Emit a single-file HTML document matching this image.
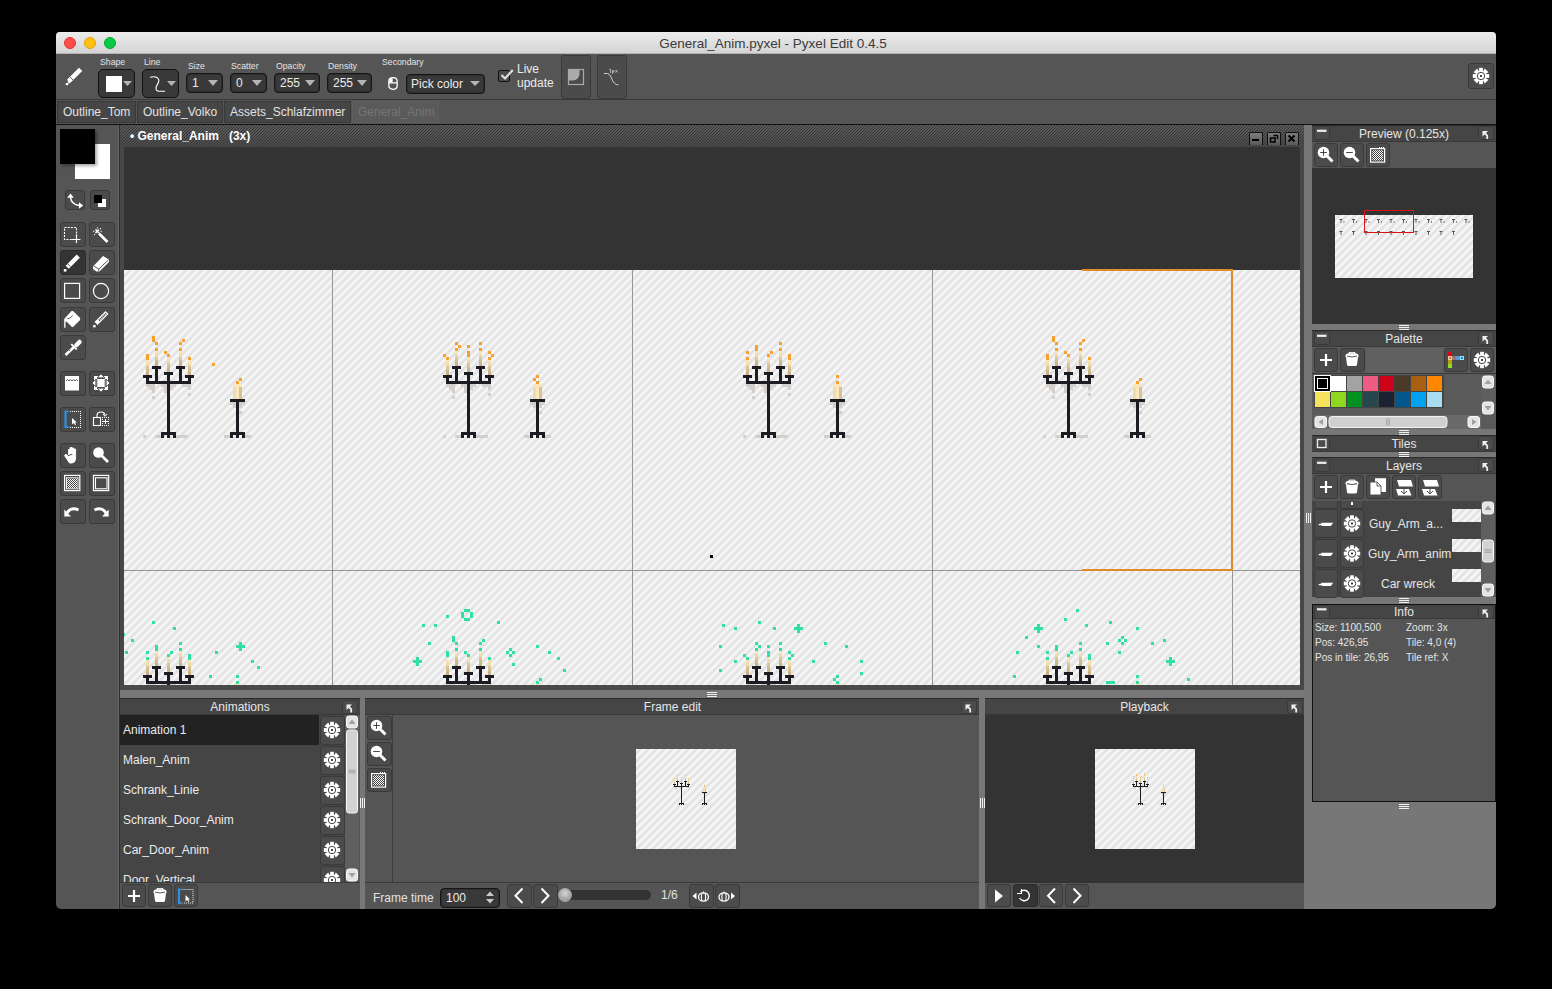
<!DOCTYPE html><html><head><meta charset="utf-8"><style>
*{box-sizing:border-box;margin:0;padding:0}
html,body{width:1552px;height:989px;background:#000;overflow:hidden;font-family:"Liberation Sans",sans-serif;position:relative}
div{position:absolute}
svg{position:absolute;overflow:visible}
.t{white-space:nowrap;line-height:1}
.dd{background:#393939;border:1px solid #161616;border-radius:4px;box-shadow:inset 0 0 0 1px #2e2e2e}
.btn{background:#4b4b4b;border:1px solid #3a3a3a;border-radius:3px}
.btnd{background:#343434;border:1px solid #2a2a2a;border-radius:3px}
.tab{background:#464646;border:1px solid #393939}
.ph{background:#454545;border-top:1px solid #2b2b2b;border-bottom:1px solid #393939}
.split{background:#777}
</style></head><body>
<div style="left:56px;top:32px;width:1440px;height:877px;background:#555;border-radius:4px"></div>
<div style="left:56px;top:32px;width:1440px;height:22px;background:linear-gradient(#ececec,#d4d4d4);border-radius:4px 4px 0 0;border-bottom:1px solid #b4b4b4"></div>
<div style="left:64px;top:37px;width:12px;height:12px;border-radius:50%;background:#fd4e4a;border:1px solid #e2332f"></div>
<div style="left:84px;top:37px;width:12px;height:12px;border-radius:50%;background:#ffc010;border:1px solid #e0a00a"></div>
<div style="left:104px;top:37px;width:12px;height:12px;border-radius:50%;background:#05cb45;border:1px solid #02aa35"></div>
<div class="t" style="left:53px;width:1440px;top:36.5px;text-align:center;font-size:13.5px;color:#3b3b3b">General_Anim.pyxel - Pyxel Edit 0.4.5</div>
<div style="left:56px;top:99px;width:1440px;height:1px;background:#3a3a3a"></div>
<div class="t" style="left:100px;top:57.5px;font-size:8.7px;color:#e4e4e4;">Shape</div>
<div class="t" style="left:144px;top:57.5px;font-size:8.7px;color:#e4e4e4;">Line</div>
<div class="t" style="left:188px;top:61.5px;font-size:8.7px;color:#e4e4e4;">Size</div>
<div class="t" style="left:231px;top:61.5px;font-size:8.7px;color:#e4e4e4;">Scatter</div>
<div class="t" style="left:276px;top:61.5px;font-size:8.7px;color:#e4e4e4;">Opacity</div>
<div class="t" style="left:328px;top:61.5px;font-size:8.7px;color:#e4e4e4;">Density</div>
<div class="t" style="left:382px;top:57.5px;font-size:8.7px;color:#e4e4e4;">Secondary</div>
<div class="dd" style="left:98px;top:69px;width:37px;height:29px;border-radius:5px;border-width:1.5px;border-color:#111;box-shadow:none"></div>
<div class="dd" style="left:142px;top:69px;width:37px;height:29px;border-radius:5px;border-width:1.5px;border-color:#111;box-shadow:none"></div>
<div style="left:106px;top:76px;width:16px;height:16px;background:#fff"></div>
<svg style="left:123px;top:81px;" width="9" height="5" viewBox="0 0 9 5"><path d="M0 0H9L4.5 5Z" fill="#b4b4b4"/></svg>
<svg style="left:167px;top:81px;" width="9" height="5" viewBox="0 0 9 5"><path d="M0 0H9L4.5 5Z" fill="#b4b4b4"/></svg>
<svg style="left:150px;top:76px;" width="17" height="17" viewBox="0 0 17 17"><path d="M0 1.2C4 0.2 7.5 0.5 8.8 3.8C9.6 7 6 9 6 12C6 14.2 7 15.2 9 15.2H15" fill="none" stroke="#fff" stroke-width="1.1"/></svg>
<div class="dd" style="left:186px;top:73px;width:37px;height:20px"></div>
<div class="t" style="left:192px;top:77px;font-size:12px;color:#ececec;">1</div>
<svg style="left:208px;top:80px;" width="10" height="6" viewBox="0 0 10 6"><path d="M0 0H10L5.0 6Z" fill="#b4b4b4"/></svg>
<div class="dd" style="left:230px;top:73px;width:37px;height:20px"></div>
<div class="t" style="left:236px;top:77px;font-size:12px;color:#ececec;">0</div>
<svg style="left:252px;top:80px;" width="10" height="6" viewBox="0 0 10 6"><path d="M0 0H10L5.0 6Z" fill="#b4b4b4"/></svg>
<div class="dd" style="left:274px;top:73px;width:46px;height:20px"></div>
<div class="t" style="left:280px;top:77px;font-size:12px;color:#ececec;">255</div>
<svg style="left:305px;top:80px;" width="10" height="6" viewBox="0 0 10 6"><path d="M0 0H10L5.0 6Z" fill="#b4b4b4"/></svg>
<div class="dd" style="left:327px;top:73px;width:45px;height:20px"></div>
<div class="t" style="left:333px;top:77px;font-size:12px;color:#ececec;">255</div>
<svg style="left:357px;top:80px;" width="10" height="6" viewBox="0 0 10 6"><path d="M0 0H10L5.0 6Z" fill="#b4b4b4"/></svg>
<svg style="left:388px;top:77px;" width="10" height="13" viewBox="0 0 10 13"><path d="M0.8 4.5C0.8 2 2.5 0.7 5 0.7C7.5 0.7 9.2 2 9.2 4.5V8.5C9.2 11 7.5 12.3 5 12.3C2.5 12.3 0.8 11 0.8 8.5Z M0.8 5.8H9.2" fill="none" stroke="#fff" stroke-width="1.3"/><path d="M1.2 5.5V4.5C1.2 2.3 2.6 1.2 4.6 1.1V5.5Z" fill="#fff"/></svg>
<div class="dd" style="left:406px;top:74px;width:79px;height:20px"></div>
<div class="t" style="left:411px;top:77.5px;font-size:12px;color:#ececec;">Pick color</div>
<svg style="left:470px;top:81px;" width="10" height="5" viewBox="0 0 10 5"><path d="M0 0H10L5.0 5Z" fill="#b4b4b4"/></svg>
<div style="left:498px;top:70px;width:12px;height:12px;background:#4a4a4a;border:1px solid #111;border-radius:2px"></div>
<svg style="left:0px;top:0px;" width="1" height="1" viewBox="0 0 1 1"><path d="M501.5 75L505 78.5L512.8 70" fill="none" stroke="#dedede" stroke-width="2.2"/></svg>
<div class="t" style="left:517px;top:63px;font-size:12px;color:#ececec;">Live</div>
<div class="t" style="left:517px;top:77px;font-size:12px;color:#ececec;">update</div>
<div class="btn" style="left:561px;top:55px;width:30px;height:44px"></div>
<div class="btn" style="left:597px;top:55px;width:30px;height:44px"></div>
<svg style="left:0px;top:0px;" width="1" height="1" viewBox="0 0 1 1"><rect x="568.5" y="69.5" width="15" height="15" fill="none" stroke="#ababab" stroke-width="1.2"/><path d="M568.5 69.5H579.5V74A6.5 6.5 0 0 1 573 80.5H568.5Z" fill="#ababab"/></svg>
<svg style="left:0px;top:0px;" width="1" height="1" viewBox="0 0 1 1"><path d="M604 73.5H607.5Q610 74 611.5 78Q613.5 84.5 618.5 85" fill="none" stroke="#d0d0d0" stroke-width="1"/><path d="M609.5 69.5L610.5 69V73M612.5 70.5V74M612.5 70.5H614V72H612.5M615.5 70L617.5 72.5M617.5 70L615.5 72.5" fill="none" stroke="#c8c8c8" stroke-width="0.8"/></svg>
<div class="btn" style="left:1468px;top:63px;width:26px;height:26px"></div>
<div style="left:56px;top:124px;width:1440px;height:1px;background:#111"></div>
<div class="tab" style="left:57px;top:101px;width:79px;height:22px"></div>
<div class="t" style="left:63px;top:106px;font-size:12px;color:#e2e2e2;">Outline_Tom</div>
<div class="tab" style="left:137px;top:101px;width:86px;height:22px"></div>
<div class="t" style="left:143px;top:106px;font-size:12px;color:#e2e2e2;">Outline_Volko</div>
<div class="tab" style="left:224px;top:101px;width:127px;height:22px"></div>
<div class="t" style="left:230px;top:106px;font-size:12px;color:#e2e2e2;">Assets_Schlafzimmer</div>
<div class="tab" style="left:352px;top:101px;width:87px;height:22px;background:#5a5a5a;border-color:#5e5e5e"></div>
<div class="t" style="left:358px;top:106px;font-size:12px;color:#757575;">General_Anim</div>
<div style="left:118px;top:125px;width:1px;height:784px;background:#656565"></div>
<div style="left:119px;top:125px;width:1px;height:784px;background:#2c2c2c"></div>
<div style="left:60px;top:129px;width:35px;height:35px;background:#000"></div>
<div style="left:75px;top:144px;width:35px;height:35px;background:#fff"></div>
<div style="left:60px;top:129px;width:35px;height:35px;background:#000;box-shadow:2px 2px 3px rgba(0,0,0,.35)"></div>
<div class="btn" style="left:65px;top:190px;width:20px;height:20px"></div>
<div class="btn" style="left:90px;top:190px;width:20px;height:20px"></div>
<div class="btn" style="left:59.5px;top:222px;width:26px;height:25px"></div>
<div class="btn" style="left:88.5px;top:222px;width:26px;height:25px"></div>
<div class="btnd" style="left:59.5px;top:250px;width:26px;height:25px"></div>
<div class="btn" style="left:88.5px;top:250px;width:26px;height:25px"></div>
<div class="btn" style="left:59.5px;top:278px;width:26px;height:25px"></div>
<div class="btn" style="left:88.5px;top:278px;width:26px;height:25px"></div>
<div class="btn" style="left:59.5px;top:306.5px;width:26px;height:25px"></div>
<div class="btn" style="left:88.5px;top:306.5px;width:26px;height:25px"></div>
<div class="btn" style="left:59.5px;top:334.5px;width:26px;height:25px"></div>
<div class="btn" style="left:59.5px;top:370.5px;width:26px;height:25px"></div>
<div class="btn" style="left:88.5px;top:370.5px;width:26px;height:25px"></div>
<div class="btn" style="left:59.5px;top:406.5px;width:26px;height:25px"></div>
<div class="btn" style="left:88.5px;top:406.5px;width:26px;height:25px"></div>
<div class="btn" style="left:59.5px;top:442.5px;width:26px;height:25px"></div>
<div class="btn" style="left:88.5px;top:442.5px;width:26px;height:25px"></div>
<div class="btn" style="left:59.5px;top:470.5px;width:26px;height:25px"></div>
<div class="btn" style="left:88.5px;top:470.5px;width:26px;height:25px"></div>
<div class="btn" style="left:59.5px;top:498.5px;width:26px;height:25px"></div>
<div class="btn" style="left:88.5px;top:498.5px;width:26px;height:25px"></div>
<svg style="left:120px;top:125px" width="1184" height="22" viewBox="120 125 1184 22"><defs><linearGradient id="hg" x1="0" y1="0" x2="0" y2="1"><stop offset="0" stop-color="#5c5c5c"/><stop offset="1" stop-color="#4c4c4c"/></linearGradient><pattern id="hp" width="3" height="3" x="0" y="0" patternUnits="userSpaceOnUse"><path d="M0 0h1v1h-1zM2 1h1v1h-1zM1 2h1v1h-1z" fill="#353535" shape-rendering="crispEdges"/></pattern></defs><rect x="120" y="125" width="1184" height="22" fill="url(#hg)"/><rect x="120" y="125" width="1184" height="22" fill="url(#hp)"/></svg>
<div class="t" style="left:130px;top:130px;font-size:12px;font-weight:bold;color:#fff">&bull; General_Anim&nbsp;&nbsp;&nbsp;(3x)</div>
<div style="left:1249px;top:132px;width:14px;height:13px;background:linear-gradient(#7c7c7c,#5a5a5a);border:1px solid #111;border-bottom:none;border-radius:2px 2px 0 0"></div>
<div style="left:1267px;top:132px;width:14px;height:13px;background:linear-gradient(#7c7c7c,#5a5a5a);border:1px solid #111;border-bottom:none;border-radius:2px 2px 0 0"></div>
<div style="left:1285px;top:132px;width:14px;height:13px;background:linear-gradient(#7c7c7c,#5a5a5a);border:1px solid #111;border-bottom:none;border-radius:2px 2px 0 0"></div>
<div style="left:120px;top:147px;width:1184px;height:538px;background:#474747"></div>
<div style="left:124px;top:147px;width:1176px;height:538px;background:#333"></div>
<svg style="left:0;top:0" width="1552" height="989" viewBox="0 0 1552 989"><defs><pattern id="str" width="8" height="8" x="0" y="0" patternUnits="userSpaceOnUse"><rect width="8" height="8" fill="#e4e4e4"/><path d="M2 0h1v1h-1zM3 0h1v1h-1zM4 0h1v1h-1zM5 0h1v1h-1zM1 1h1v1h-1zM2 1h1v1h-1zM3 1h1v1h-1zM4 1h1v1h-1zM0 2h1v1h-1zM1 2h1v1h-1zM2 2h1v1h-1zM3 2h1v1h-1zM0 3h1v1h-1zM1 3h1v1h-1zM2 3h1v1h-1zM7 3h1v1h-1zM0 4h1v1h-1zM1 4h1v1h-1zM6 4h1v1h-1zM7 4h1v1h-1zM0 5h1v1h-1zM5 5h1v1h-1zM6 5h1v1h-1zM7 5h1v1h-1zM4 6h1v1h-1zM5 6h1v1h-1zM6 6h1v1h-1zM7 6h1v1h-1zM3 7h1v1h-1zM4 7h1v1h-1zM5 7h1v1h-1zM6 7h1v1h-1z" fill="#f5f5f5" shape-rendering="crispEdges"/></pattern><clipPath id="cv"><rect x="124" y="147" width="1176" height="538"/></clipPath></defs><g clip-path="url(#cv)"><rect x="124" y="270" width="1176" height="415" fill="url(#str)"/><rect x="146" y="384" width="3" height="3" fill="#d3cfcc"/><rect x="149" y="384" width="3" height="3" fill="#d3cfcc"/><rect x="152" y="384" width="3" height="3" fill="#d3cfcc"/><rect x="161" y="384" width="3" height="3" fill="#d3cfcc"/><rect x="164" y="384" width="3" height="3" fill="#d3cfcc"/><rect x="170" y="384" width="3" height="3" fill="#d3cfcc"/><rect x="173" y="384" width="3" height="3" fill="#d3cfcc"/><rect x="182" y="384" width="3" height="3" fill="#d3cfcc"/><rect x="185" y="384" width="3" height="3" fill="#d3cfcc"/><rect x="188" y="384" width="3" height="3" fill="#d3cfcc"/><rect x="149" y="387" width="3" height="3" fill="#d3cfcc"/><rect x="152" y="387" width="3" height="3" fill="#d3cfcc"/><rect x="164" y="387" width="3" height="3" fill="#d3cfcc"/><rect x="170" y="387" width="3" height="3" fill="#d3cfcc"/><rect x="188" y="387" width="3" height="3" fill="#d3cfcc"/><rect x="152" y="390" width="3" height="3" fill="#d3cfcc"/><rect x="164" y="390" width="3" height="3" fill="#d3cfcc"/><rect x="188" y="393" width="3" height="3" fill="#d3cfcc"/><rect x="152" y="396" width="3" height="3" fill="#d3cfcc"/><rect x="143" y="435" width="3" height="3" fill="#d3cfcc"/><rect x="155" y="435" width="3" height="3" fill="#d3cfcc"/><rect x="158" y="435" width="3" height="3" fill="#d3cfcc"/><rect x="176" y="435" width="3" height="3" fill="#d3cfcc"/><rect x="179" y="435" width="3" height="3" fill="#d3cfcc"/><rect x="182" y="435" width="3" height="3" fill="#d3cfcc"/><rect x="185" y="435" width="3" height="3" fill="#d3cfcc"/><rect x="233" y="402" width="3" height="3" fill="#d3cfcc"/><rect x="239" y="402" width="3" height="3" fill="#d3cfcc"/><rect x="230" y="402" width="3" height="3" fill="#d3cfcc"/><rect x="242" y="402" width="3" height="3" fill="#d3cfcc"/><rect x="233" y="405" width="3" height="3" fill="#d3cfcc"/><rect x="239" y="405" width="3" height="3" fill="#d3cfcc"/><rect x="239" y="411" width="3" height="3" fill="#d3cfcc"/><rect x="224" y="435" width="3" height="3" fill="#d3cfcc"/><rect x="227" y="435" width="3" height="3" fill="#d3cfcc"/><rect x="245" y="435" width="3" height="3" fill="#d3cfcc"/><rect x="248" y="435" width="3" height="3" fill="#d3cfcc"/><rect x="146" y="360" width="3" height="3" fill="#fbe4b3"/><rect x="146" y="363" width="3" height="3" fill="#f1d9a8"/><rect x="146" y="366" width="3" height="3" fill="#dcc597"/><rect x="146" y="369" width="3" height="3" fill="#d2bb8c"/><rect x="146" y="372" width="3" height="3" fill="#cab186"/><rect x="155" y="351" width="3" height="3" fill="#fbe4b3"/><rect x="155" y="354" width="3" height="3" fill="#f1d9a8"/><rect x="155" y="357" width="3" height="3" fill="#dcc597"/><rect x="155" y="360" width="3" height="3" fill="#d2bb8c"/><rect x="155" y="363" width="3" height="3" fill="#cab186"/><rect x="167" y="357" width="3" height="3" fill="#fbe4b3"/><rect x="167" y="360" width="3" height="3" fill="#f1d9a8"/><rect x="167" y="363" width="3" height="3" fill="#dcc597"/><rect x="167" y="366" width="3" height="3" fill="#d2bb8c"/><rect x="167" y="369" width="3" height="3" fill="#cab186"/><rect x="179" y="351" width="3" height="3" fill="#fbe4b3"/><rect x="179" y="354" width="3" height="3" fill="#f1d9a8"/><rect x="179" y="357" width="3" height="3" fill="#dcc597"/><rect x="179" y="360" width="3" height="3" fill="#d2bb8c"/><rect x="179" y="363" width="3" height="3" fill="#cab186"/><rect x="188" y="360" width="3" height="3" fill="#fbe4b3"/><rect x="188" y="363" width="3" height="3" fill="#f1d9a8"/><rect x="188" y="366" width="3" height="3" fill="#dcc597"/><rect x="188" y="369" width="3" height="3" fill="#d2bb8c"/><rect x="188" y="372" width="3" height="3" fill="#cab186"/><rect x="233" y="384" width="3" height="3" fill="#fbe6b8"/><rect x="236" y="384" width="3" height="3" fill="#fbe6b8"/><rect x="239" y="384" width="3" height="3" fill="#fbe6b8"/><rect x="233" y="387" width="3" height="3" fill="#f1dcae"/><rect x="236" y="387" width="3" height="3" fill="#f9e7c0"/><rect x="239" y="387" width="3" height="3" fill="#d9c293"/><rect x="233" y="390" width="3" height="3" fill="#f1dcae"/><rect x="236" y="390" width="3" height="3" fill="#f9e7c0"/><rect x="239" y="390" width="3" height="3" fill="#d9c293"/><rect x="233" y="393" width="3" height="3" fill="#f1dcae"/><rect x="236" y="393" width="3" height="3" fill="#f9e7c0"/><rect x="239" y="393" width="3" height="3" fill="#d9c293"/><rect x="233" y="396" width="3" height="3" fill="#f1dcae"/><rect x="236" y="396" width="3" height="3" fill="#f9e7c0"/><rect x="239" y="396" width="3" height="3" fill="#d9c293"/><rect x="152" y="366" width="3" height="3" fill="#1b1d22"/><rect x="155" y="366" width="3" height="3" fill="#1b1d22"/><rect x="158" y="366" width="3" height="3" fill="#1b1d22"/><rect x="176" y="366" width="3" height="3" fill="#1b1d22"/><rect x="179" y="366" width="3" height="3" fill="#1b1d22"/><rect x="182" y="366" width="3" height="3" fill="#1b1d22"/><rect x="155" y="369" width="3" height="3" fill="#1b1d22"/><rect x="179" y="369" width="3" height="3" fill="#1b1d22"/><rect x="155" y="372" width="3" height="3" fill="#1b1d22"/><rect x="179" y="372" width="3" height="3" fill="#1b1d22"/><rect x="155" y="375" width="3" height="3" fill="#1b1d22"/><rect x="179" y="375" width="3" height="3" fill="#1b1d22"/><rect x="155" y="378" width="3" height="3" fill="#1b1d22"/><rect x="179" y="378" width="3" height="3" fill="#1b1d22"/><rect x="164" y="372" width="3" height="3" fill="#1b1d22"/><rect x="167" y="372" width="3" height="3" fill="#1b1d22"/><rect x="170" y="372" width="3" height="3" fill="#1b1d22"/><rect x="143" y="375" width="3" height="3" fill="#1b1d22"/><rect x="146" y="375" width="3" height="3" fill="#1b1d22"/><rect x="149" y="375" width="3" height="3" fill="#1b1d22"/><rect x="185" y="375" width="3" height="3" fill="#1b1d22"/><rect x="188" y="375" width="3" height="3" fill="#1b1d22"/><rect x="191" y="375" width="3" height="3" fill="#1b1d22"/><rect x="167" y="375" width="3" height="3" fill="#1b1d22"/><rect x="167" y="378" width="3" height="3" fill="#1b1d22"/><rect x="146" y="378" width="3" height="3" fill="#1b1d22"/><rect x="188" y="378" width="3" height="3" fill="#1b1d22"/><rect x="146" y="381" width="3" height="3" fill="#1b1d22"/><rect x="149" y="381" width="3" height="3" fill="#1b1d22"/><rect x="152" y="381" width="3" height="3" fill="#1b1d22"/><rect x="155" y="381" width="3" height="3" fill="#1b1d22"/><rect x="158" y="381" width="3" height="3" fill="#1b1d22"/><rect x="161" y="381" width="3" height="3" fill="#1b1d22"/><rect x="164" y="381" width="3" height="3" fill="#1b1d22"/><rect x="167" y="381" width="3" height="3" fill="#1b1d22"/><rect x="170" y="381" width="3" height="3" fill="#1b1d22"/><rect x="173" y="381" width="3" height="3" fill="#1b1d22"/><rect x="176" y="381" width="3" height="3" fill="#1b1d22"/><rect x="179" y="381" width="3" height="3" fill="#1b1d22"/><rect x="182" y="381" width="3" height="3" fill="#1b1d22"/><rect x="185" y="381" width="3" height="3" fill="#1b1d22"/><rect x="188" y="381" width="3" height="3" fill="#1b1d22"/><rect x="167" y="384" width="3" height="3" fill="#1b1d22"/><rect x="167" y="387" width="3" height="3" fill="#1b1d22"/><rect x="167" y="390" width="3" height="3" fill="#1b1d22"/><rect x="167" y="393" width="3" height="3" fill="#1b1d22"/><rect x="167" y="396" width="3" height="3" fill="#1b1d22"/><rect x="167" y="399" width="3" height="3" fill="#1b1d22"/><rect x="167" y="402" width="3" height="3" fill="#1b1d22"/><rect x="167" y="405" width="3" height="3" fill="#1b1d22"/><rect x="167" y="408" width="3" height="3" fill="#1b1d22"/><rect x="167" y="411" width="3" height="3" fill="#1b1d22"/><rect x="167" y="414" width="3" height="3" fill="#1b1d22"/><rect x="167" y="417" width="3" height="3" fill="#1b1d22"/><rect x="167" y="420" width="3" height="3" fill="#1b1d22"/><rect x="167" y="423" width="3" height="3" fill="#1b1d22"/><rect x="167" y="426" width="3" height="3" fill="#1b1d22"/><rect x="167" y="429" width="3" height="3" fill="#1b1d22"/><rect x="161" y="432" width="3" height="3" fill="#1b1d22"/><rect x="164" y="432" width="3" height="3" fill="#1b1d22"/><rect x="167" y="432" width="3" height="3" fill="#1b1d22"/><rect x="170" y="432" width="3" height="3" fill="#1b1d22"/><rect x="173" y="432" width="3" height="3" fill="#1b1d22"/><rect x="161" y="435" width="3" height="3" fill="#1b1d22"/><rect x="167" y="435" width="3" height="3" fill="#1b1d22"/><rect x="173" y="435" width="3" height="3" fill="#1b1d22"/><rect x="230" y="399" width="3" height="3" fill="#1b1d22"/><rect x="233" y="399" width="3" height="3" fill="#1b1d22"/><rect x="236" y="399" width="3" height="3" fill="#1b1d22"/><rect x="239" y="399" width="3" height="3" fill="#1b1d22"/><rect x="242" y="399" width="3" height="3" fill="#1b1d22"/><rect x="236" y="402" width="3" height="3" fill="#1b1d22"/><rect x="236" y="405" width="3" height="3" fill="#1b1d22"/><rect x="236" y="408" width="3" height="3" fill="#1b1d22"/><rect x="236" y="411" width="3" height="3" fill="#1b1d22"/><rect x="236" y="414" width="3" height="3" fill="#1b1d22"/><rect x="236" y="417" width="3" height="3" fill="#1b1d22"/><rect x="236" y="420" width="3" height="3" fill="#1b1d22"/><rect x="236" y="423" width="3" height="3" fill="#1b1d22"/><rect x="236" y="426" width="3" height="3" fill="#1b1d22"/><rect x="236" y="429" width="3" height="3" fill="#1b1d22"/><rect x="230" y="432" width="3" height="3" fill="#1b1d22"/><rect x="233" y="432" width="3" height="3" fill="#1b1d22"/><rect x="236" y="432" width="3" height="3" fill="#1b1d22"/><rect x="239" y="432" width="3" height="3" fill="#1b1d22"/><rect x="242" y="432" width="3" height="3" fill="#1b1d22"/><rect x="230" y="435" width="3" height="3" fill="#1b1d22"/><rect x="236" y="435" width="3" height="3" fill="#1b1d22"/><rect x="242" y="435" width="3" height="3" fill="#1b1d22"/><rect x="152" y="336" width="3" height="3" fill="#f6a12e"/><rect x="152" y="339" width="3" height="3" fill="#f6a12e"/><rect x="155" y="342" width="3" height="3" fill="#f6a12e"/><rect x="155" y="348" width="3" height="3" fill="#f6a12e"/><rect x="182" y="339" width="3" height="3" fill="#f6a12e"/><rect x="179" y="342" width="3" height="3" fill="#f6a12e"/><rect x="179" y="348" width="3" height="3" fill="#f6a12e"/><rect x="164" y="351" width="3" height="3" fill="#f6a12e"/><rect x="167" y="354" width="3" height="3" fill="#f6a12e"/><rect x="146" y="354" width="3" height="3" fill="#f6a12e"/><rect x="146" y="357" width="3" height="3" fill="#f6a12e"/><rect x="188" y="357" width="3" height="3" fill="#f6a12e"/><rect x="239" y="378" width="3" height="3" fill="#f6a12e"/><rect x="236" y="381" width="3" height="3" fill="#f6a12e"/><rect x="212" y="363" width="3" height="3" fill="#f6a12e"/><rect x="446" y="384" width="3" height="3" fill="#d3cfcc"/><rect x="449" y="384" width="3" height="3" fill="#d3cfcc"/><rect x="452" y="384" width="3" height="3" fill="#d3cfcc"/><rect x="461" y="384" width="3" height="3" fill="#d3cfcc"/><rect x="464" y="384" width="3" height="3" fill="#d3cfcc"/><rect x="470" y="384" width="3" height="3" fill="#d3cfcc"/><rect x="473" y="384" width="3" height="3" fill="#d3cfcc"/><rect x="482" y="384" width="3" height="3" fill="#d3cfcc"/><rect x="485" y="384" width="3" height="3" fill="#d3cfcc"/><rect x="488" y="384" width="3" height="3" fill="#d3cfcc"/><rect x="449" y="387" width="3" height="3" fill="#d3cfcc"/><rect x="452" y="387" width="3" height="3" fill="#d3cfcc"/><rect x="464" y="387" width="3" height="3" fill="#d3cfcc"/><rect x="470" y="387" width="3" height="3" fill="#d3cfcc"/><rect x="488" y="387" width="3" height="3" fill="#d3cfcc"/><rect x="452" y="390" width="3" height="3" fill="#d3cfcc"/><rect x="464" y="390" width="3" height="3" fill="#d3cfcc"/><rect x="488" y="393" width="3" height="3" fill="#d3cfcc"/><rect x="452" y="396" width="3" height="3" fill="#d3cfcc"/><rect x="443" y="435" width="3" height="3" fill="#d3cfcc"/><rect x="455" y="435" width="3" height="3" fill="#d3cfcc"/><rect x="458" y="435" width="3" height="3" fill="#d3cfcc"/><rect x="476" y="435" width="3" height="3" fill="#d3cfcc"/><rect x="479" y="435" width="3" height="3" fill="#d3cfcc"/><rect x="482" y="435" width="3" height="3" fill="#d3cfcc"/><rect x="485" y="435" width="3" height="3" fill="#d3cfcc"/><rect x="533" y="402" width="3" height="3" fill="#d3cfcc"/><rect x="539" y="402" width="3" height="3" fill="#d3cfcc"/><rect x="530" y="402" width="3" height="3" fill="#d3cfcc"/><rect x="542" y="402" width="3" height="3" fill="#d3cfcc"/><rect x="533" y="405" width="3" height="3" fill="#d3cfcc"/><rect x="539" y="405" width="3" height="3" fill="#d3cfcc"/><rect x="539" y="411" width="3" height="3" fill="#d3cfcc"/><rect x="524" y="435" width="3" height="3" fill="#d3cfcc"/><rect x="527" y="435" width="3" height="3" fill="#d3cfcc"/><rect x="545" y="435" width="3" height="3" fill="#d3cfcc"/><rect x="548" y="435" width="3" height="3" fill="#d3cfcc"/><rect x="446" y="360" width="3" height="3" fill="#fbe4b3"/><rect x="446" y="363" width="3" height="3" fill="#f1d9a8"/><rect x="446" y="366" width="3" height="3" fill="#dcc597"/><rect x="446" y="369" width="3" height="3" fill="#d2bb8c"/><rect x="446" y="372" width="3" height="3" fill="#cab186"/><rect x="455" y="351" width="3" height="3" fill="#fbe4b3"/><rect x="455" y="354" width="3" height="3" fill="#f1d9a8"/><rect x="455" y="357" width="3" height="3" fill="#dcc597"/><rect x="455" y="360" width="3" height="3" fill="#d2bb8c"/><rect x="455" y="363" width="3" height="3" fill="#cab186"/><rect x="467" y="357" width="3" height="3" fill="#fbe4b3"/><rect x="467" y="360" width="3" height="3" fill="#f1d9a8"/><rect x="467" y="363" width="3" height="3" fill="#dcc597"/><rect x="467" y="366" width="3" height="3" fill="#d2bb8c"/><rect x="467" y="369" width="3" height="3" fill="#cab186"/><rect x="479" y="351" width="3" height="3" fill="#fbe4b3"/><rect x="479" y="354" width="3" height="3" fill="#f1d9a8"/><rect x="479" y="357" width="3" height="3" fill="#dcc597"/><rect x="479" y="360" width="3" height="3" fill="#d2bb8c"/><rect x="479" y="363" width="3" height="3" fill="#cab186"/><rect x="488" y="360" width="3" height="3" fill="#fbe4b3"/><rect x="488" y="363" width="3" height="3" fill="#f1d9a8"/><rect x="488" y="366" width="3" height="3" fill="#dcc597"/><rect x="488" y="369" width="3" height="3" fill="#d2bb8c"/><rect x="488" y="372" width="3" height="3" fill="#cab186"/><rect x="533" y="384" width="3" height="3" fill="#fbe6b8"/><rect x="536" y="384" width="3" height="3" fill="#fbe6b8"/><rect x="539" y="384" width="3" height="3" fill="#fbe6b8"/><rect x="533" y="387" width="3" height="3" fill="#f1dcae"/><rect x="536" y="387" width="3" height="3" fill="#f9e7c0"/><rect x="539" y="387" width="3" height="3" fill="#d9c293"/><rect x="533" y="390" width="3" height="3" fill="#f1dcae"/><rect x="536" y="390" width="3" height="3" fill="#f9e7c0"/><rect x="539" y="390" width="3" height="3" fill="#d9c293"/><rect x="533" y="393" width="3" height="3" fill="#f1dcae"/><rect x="536" y="393" width="3" height="3" fill="#f9e7c0"/><rect x="539" y="393" width="3" height="3" fill="#d9c293"/><rect x="533" y="396" width="3" height="3" fill="#f1dcae"/><rect x="536" y="396" width="3" height="3" fill="#f9e7c0"/><rect x="539" y="396" width="3" height="3" fill="#d9c293"/><rect x="452" y="366" width="3" height="3" fill="#1b1d22"/><rect x="455" y="366" width="3" height="3" fill="#1b1d22"/><rect x="458" y="366" width="3" height="3" fill="#1b1d22"/><rect x="476" y="366" width="3" height="3" fill="#1b1d22"/><rect x="479" y="366" width="3" height="3" fill="#1b1d22"/><rect x="482" y="366" width="3" height="3" fill="#1b1d22"/><rect x="455" y="369" width="3" height="3" fill="#1b1d22"/><rect x="479" y="369" width="3" height="3" fill="#1b1d22"/><rect x="455" y="372" width="3" height="3" fill="#1b1d22"/><rect x="479" y="372" width="3" height="3" fill="#1b1d22"/><rect x="455" y="375" width="3" height="3" fill="#1b1d22"/><rect x="479" y="375" width="3" height="3" fill="#1b1d22"/><rect x="455" y="378" width="3" height="3" fill="#1b1d22"/><rect x="479" y="378" width="3" height="3" fill="#1b1d22"/><rect x="464" y="372" width="3" height="3" fill="#1b1d22"/><rect x="467" y="372" width="3" height="3" fill="#1b1d22"/><rect x="470" y="372" width="3" height="3" fill="#1b1d22"/><rect x="443" y="375" width="3" height="3" fill="#1b1d22"/><rect x="446" y="375" width="3" height="3" fill="#1b1d22"/><rect x="449" y="375" width="3" height="3" fill="#1b1d22"/><rect x="485" y="375" width="3" height="3" fill="#1b1d22"/><rect x="488" y="375" width="3" height="3" fill="#1b1d22"/><rect x="491" y="375" width="3" height="3" fill="#1b1d22"/><rect x="467" y="375" width="3" height="3" fill="#1b1d22"/><rect x="467" y="378" width="3" height="3" fill="#1b1d22"/><rect x="446" y="378" width="3" height="3" fill="#1b1d22"/><rect x="488" y="378" width="3" height="3" fill="#1b1d22"/><rect x="446" y="381" width="3" height="3" fill="#1b1d22"/><rect x="449" y="381" width="3" height="3" fill="#1b1d22"/><rect x="452" y="381" width="3" height="3" fill="#1b1d22"/><rect x="455" y="381" width="3" height="3" fill="#1b1d22"/><rect x="458" y="381" width="3" height="3" fill="#1b1d22"/><rect x="461" y="381" width="3" height="3" fill="#1b1d22"/><rect x="464" y="381" width="3" height="3" fill="#1b1d22"/><rect x="467" y="381" width="3" height="3" fill="#1b1d22"/><rect x="470" y="381" width="3" height="3" fill="#1b1d22"/><rect x="473" y="381" width="3" height="3" fill="#1b1d22"/><rect x="476" y="381" width="3" height="3" fill="#1b1d22"/><rect x="479" y="381" width="3" height="3" fill="#1b1d22"/><rect x="482" y="381" width="3" height="3" fill="#1b1d22"/><rect x="485" y="381" width="3" height="3" fill="#1b1d22"/><rect x="488" y="381" width="3" height="3" fill="#1b1d22"/><rect x="467" y="384" width="3" height="3" fill="#1b1d22"/><rect x="467" y="387" width="3" height="3" fill="#1b1d22"/><rect x="467" y="390" width="3" height="3" fill="#1b1d22"/><rect x="467" y="393" width="3" height="3" fill="#1b1d22"/><rect x="467" y="396" width="3" height="3" fill="#1b1d22"/><rect x="467" y="399" width="3" height="3" fill="#1b1d22"/><rect x="467" y="402" width="3" height="3" fill="#1b1d22"/><rect x="467" y="405" width="3" height="3" fill="#1b1d22"/><rect x="467" y="408" width="3" height="3" fill="#1b1d22"/><rect x="467" y="411" width="3" height="3" fill="#1b1d22"/><rect x="467" y="414" width="3" height="3" fill="#1b1d22"/><rect x="467" y="417" width="3" height="3" fill="#1b1d22"/><rect x="467" y="420" width="3" height="3" fill="#1b1d22"/><rect x="467" y="423" width="3" height="3" fill="#1b1d22"/><rect x="467" y="426" width="3" height="3" fill="#1b1d22"/><rect x="467" y="429" width="3" height="3" fill="#1b1d22"/><rect x="461" y="432" width="3" height="3" fill="#1b1d22"/><rect x="464" y="432" width="3" height="3" fill="#1b1d22"/><rect x="467" y="432" width="3" height="3" fill="#1b1d22"/><rect x="470" y="432" width="3" height="3" fill="#1b1d22"/><rect x="473" y="432" width="3" height="3" fill="#1b1d22"/><rect x="461" y="435" width="3" height="3" fill="#1b1d22"/><rect x="467" y="435" width="3" height="3" fill="#1b1d22"/><rect x="473" y="435" width="3" height="3" fill="#1b1d22"/><rect x="530" y="399" width="3" height="3" fill="#1b1d22"/><rect x="533" y="399" width="3" height="3" fill="#1b1d22"/><rect x="536" y="399" width="3" height="3" fill="#1b1d22"/><rect x="539" y="399" width="3" height="3" fill="#1b1d22"/><rect x="542" y="399" width="3" height="3" fill="#1b1d22"/><rect x="536" y="402" width="3" height="3" fill="#1b1d22"/><rect x="536" y="405" width="3" height="3" fill="#1b1d22"/><rect x="536" y="408" width="3" height="3" fill="#1b1d22"/><rect x="536" y="411" width="3" height="3" fill="#1b1d22"/><rect x="536" y="414" width="3" height="3" fill="#1b1d22"/><rect x="536" y="417" width="3" height="3" fill="#1b1d22"/><rect x="536" y="420" width="3" height="3" fill="#1b1d22"/><rect x="536" y="423" width="3" height="3" fill="#1b1d22"/><rect x="536" y="426" width="3" height="3" fill="#1b1d22"/><rect x="536" y="429" width="3" height="3" fill="#1b1d22"/><rect x="530" y="432" width="3" height="3" fill="#1b1d22"/><rect x="533" y="432" width="3" height="3" fill="#1b1d22"/><rect x="536" y="432" width="3" height="3" fill="#1b1d22"/><rect x="539" y="432" width="3" height="3" fill="#1b1d22"/><rect x="542" y="432" width="3" height="3" fill="#1b1d22"/><rect x="530" y="435" width="3" height="3" fill="#1b1d22"/><rect x="536" y="435" width="3" height="3" fill="#1b1d22"/><rect x="542" y="435" width="3" height="3" fill="#1b1d22"/><rect x="443" y="354" width="3" height="3" fill="#f6a12e"/><rect x="446" y="357" width="3" height="3" fill="#f6a12e"/><rect x="455" y="342" width="3" height="3" fill="#f6a12e"/><rect x="458" y="345" width="3" height="3" fill="#f6a12e"/><rect x="455" y="348" width="3" height="3" fill="#f6a12e"/><rect x="467" y="345" width="3" height="3" fill="#f6a12e"/><rect x="467" y="351" width="3" height="3" fill="#f6a12e"/><rect x="467" y="354" width="3" height="3" fill="#f6a12e"/><rect x="479" y="342" width="3" height="3" fill="#f6a12e"/><rect x="479" y="348" width="3" height="3" fill="#f6a12e"/><rect x="488" y="351" width="3" height="3" fill="#f6a12e"/><rect x="491" y="354" width="3" height="3" fill="#f6a12e"/><rect x="488" y="357" width="3" height="3" fill="#f6a12e"/><rect x="536" y="375" width="3" height="3" fill="#f6a12e"/><rect x="533" y="378" width="3" height="3" fill="#f6a12e"/><rect x="536" y="381" width="3" height="3" fill="#f6a12e"/><rect x="746" y="384" width="3" height="3" fill="#d3cfcc"/><rect x="749" y="384" width="3" height="3" fill="#d3cfcc"/><rect x="752" y="384" width="3" height="3" fill="#d3cfcc"/><rect x="761" y="384" width="3" height="3" fill="#d3cfcc"/><rect x="764" y="384" width="3" height="3" fill="#d3cfcc"/><rect x="770" y="384" width="3" height="3" fill="#d3cfcc"/><rect x="773" y="384" width="3" height="3" fill="#d3cfcc"/><rect x="782" y="384" width="3" height="3" fill="#d3cfcc"/><rect x="785" y="384" width="3" height="3" fill="#d3cfcc"/><rect x="788" y="384" width="3" height="3" fill="#d3cfcc"/><rect x="749" y="387" width="3" height="3" fill="#d3cfcc"/><rect x="752" y="387" width="3" height="3" fill="#d3cfcc"/><rect x="764" y="387" width="3" height="3" fill="#d3cfcc"/><rect x="770" y="387" width="3" height="3" fill="#d3cfcc"/><rect x="788" y="387" width="3" height="3" fill="#d3cfcc"/><rect x="752" y="390" width="3" height="3" fill="#d3cfcc"/><rect x="764" y="390" width="3" height="3" fill="#d3cfcc"/><rect x="788" y="393" width="3" height="3" fill="#d3cfcc"/><rect x="752" y="396" width="3" height="3" fill="#d3cfcc"/><rect x="743" y="435" width="3" height="3" fill="#d3cfcc"/><rect x="755" y="435" width="3" height="3" fill="#d3cfcc"/><rect x="758" y="435" width="3" height="3" fill="#d3cfcc"/><rect x="776" y="435" width="3" height="3" fill="#d3cfcc"/><rect x="779" y="435" width="3" height="3" fill="#d3cfcc"/><rect x="782" y="435" width="3" height="3" fill="#d3cfcc"/><rect x="785" y="435" width="3" height="3" fill="#d3cfcc"/><rect x="833" y="402" width="3" height="3" fill="#d3cfcc"/><rect x="839" y="402" width="3" height="3" fill="#d3cfcc"/><rect x="830" y="402" width="3" height="3" fill="#d3cfcc"/><rect x="842" y="402" width="3" height="3" fill="#d3cfcc"/><rect x="833" y="405" width="3" height="3" fill="#d3cfcc"/><rect x="839" y="405" width="3" height="3" fill="#d3cfcc"/><rect x="839" y="411" width="3" height="3" fill="#d3cfcc"/><rect x="824" y="435" width="3" height="3" fill="#d3cfcc"/><rect x="827" y="435" width="3" height="3" fill="#d3cfcc"/><rect x="845" y="435" width="3" height="3" fill="#d3cfcc"/><rect x="848" y="435" width="3" height="3" fill="#d3cfcc"/><rect x="746" y="360" width="3" height="3" fill="#fbe4b3"/><rect x="746" y="363" width="3" height="3" fill="#f1d9a8"/><rect x="746" y="366" width="3" height="3" fill="#dcc597"/><rect x="746" y="369" width="3" height="3" fill="#d2bb8c"/><rect x="746" y="372" width="3" height="3" fill="#cab186"/><rect x="755" y="351" width="3" height="3" fill="#fbe4b3"/><rect x="755" y="354" width="3" height="3" fill="#f1d9a8"/><rect x="755" y="357" width="3" height="3" fill="#dcc597"/><rect x="755" y="360" width="3" height="3" fill="#d2bb8c"/><rect x="755" y="363" width="3" height="3" fill="#cab186"/><rect x="767" y="357" width="3" height="3" fill="#fbe4b3"/><rect x="767" y="360" width="3" height="3" fill="#f1d9a8"/><rect x="767" y="363" width="3" height="3" fill="#dcc597"/><rect x="767" y="366" width="3" height="3" fill="#d2bb8c"/><rect x="767" y="369" width="3" height="3" fill="#cab186"/><rect x="779" y="351" width="3" height="3" fill="#fbe4b3"/><rect x="779" y="354" width="3" height="3" fill="#f1d9a8"/><rect x="779" y="357" width="3" height="3" fill="#dcc597"/><rect x="779" y="360" width="3" height="3" fill="#d2bb8c"/><rect x="779" y="363" width="3" height="3" fill="#cab186"/><rect x="788" y="360" width="3" height="3" fill="#fbe4b3"/><rect x="788" y="363" width="3" height="3" fill="#f1d9a8"/><rect x="788" y="366" width="3" height="3" fill="#dcc597"/><rect x="788" y="369" width="3" height="3" fill="#d2bb8c"/><rect x="788" y="372" width="3" height="3" fill="#cab186"/><rect x="833" y="384" width="3" height="3" fill="#fbe6b8"/><rect x="836" y="384" width="3" height="3" fill="#fbe6b8"/><rect x="839" y="384" width="3" height="3" fill="#fbe6b8"/><rect x="833" y="387" width="3" height="3" fill="#f1dcae"/><rect x="836" y="387" width="3" height="3" fill="#f9e7c0"/><rect x="839" y="387" width="3" height="3" fill="#d9c293"/><rect x="833" y="390" width="3" height="3" fill="#f1dcae"/><rect x="836" y="390" width="3" height="3" fill="#f9e7c0"/><rect x="839" y="390" width="3" height="3" fill="#d9c293"/><rect x="833" y="393" width="3" height="3" fill="#f1dcae"/><rect x="836" y="393" width="3" height="3" fill="#f9e7c0"/><rect x="839" y="393" width="3" height="3" fill="#d9c293"/><rect x="833" y="396" width="3" height="3" fill="#f1dcae"/><rect x="836" y="396" width="3" height="3" fill="#f9e7c0"/><rect x="839" y="396" width="3" height="3" fill="#d9c293"/><rect x="752" y="366" width="3" height="3" fill="#1b1d22"/><rect x="755" y="366" width="3" height="3" fill="#1b1d22"/><rect x="758" y="366" width="3" height="3" fill="#1b1d22"/><rect x="776" y="366" width="3" height="3" fill="#1b1d22"/><rect x="779" y="366" width="3" height="3" fill="#1b1d22"/><rect x="782" y="366" width="3" height="3" fill="#1b1d22"/><rect x="755" y="369" width="3" height="3" fill="#1b1d22"/><rect x="779" y="369" width="3" height="3" fill="#1b1d22"/><rect x="755" y="372" width="3" height="3" fill="#1b1d22"/><rect x="779" y="372" width="3" height="3" fill="#1b1d22"/><rect x="755" y="375" width="3" height="3" fill="#1b1d22"/><rect x="779" y="375" width="3" height="3" fill="#1b1d22"/><rect x="755" y="378" width="3" height="3" fill="#1b1d22"/><rect x="779" y="378" width="3" height="3" fill="#1b1d22"/><rect x="764" y="372" width="3" height="3" fill="#1b1d22"/><rect x="767" y="372" width="3" height="3" fill="#1b1d22"/><rect x="770" y="372" width="3" height="3" fill="#1b1d22"/><rect x="743" y="375" width="3" height="3" fill="#1b1d22"/><rect x="746" y="375" width="3" height="3" fill="#1b1d22"/><rect x="749" y="375" width="3" height="3" fill="#1b1d22"/><rect x="785" y="375" width="3" height="3" fill="#1b1d22"/><rect x="788" y="375" width="3" height="3" fill="#1b1d22"/><rect x="791" y="375" width="3" height="3" fill="#1b1d22"/><rect x="767" y="375" width="3" height="3" fill="#1b1d22"/><rect x="767" y="378" width="3" height="3" fill="#1b1d22"/><rect x="746" y="378" width="3" height="3" fill="#1b1d22"/><rect x="788" y="378" width="3" height="3" fill="#1b1d22"/><rect x="746" y="381" width="3" height="3" fill="#1b1d22"/><rect x="749" y="381" width="3" height="3" fill="#1b1d22"/><rect x="752" y="381" width="3" height="3" fill="#1b1d22"/><rect x="755" y="381" width="3" height="3" fill="#1b1d22"/><rect x="758" y="381" width="3" height="3" fill="#1b1d22"/><rect x="761" y="381" width="3" height="3" fill="#1b1d22"/><rect x="764" y="381" width="3" height="3" fill="#1b1d22"/><rect x="767" y="381" width="3" height="3" fill="#1b1d22"/><rect x="770" y="381" width="3" height="3" fill="#1b1d22"/><rect x="773" y="381" width="3" height="3" fill="#1b1d22"/><rect x="776" y="381" width="3" height="3" fill="#1b1d22"/><rect x="779" y="381" width="3" height="3" fill="#1b1d22"/><rect x="782" y="381" width="3" height="3" fill="#1b1d22"/><rect x="785" y="381" width="3" height="3" fill="#1b1d22"/><rect x="788" y="381" width="3" height="3" fill="#1b1d22"/><rect x="767" y="384" width="3" height="3" fill="#1b1d22"/><rect x="767" y="387" width="3" height="3" fill="#1b1d22"/><rect x="767" y="390" width="3" height="3" fill="#1b1d22"/><rect x="767" y="393" width="3" height="3" fill="#1b1d22"/><rect x="767" y="396" width="3" height="3" fill="#1b1d22"/><rect x="767" y="399" width="3" height="3" fill="#1b1d22"/><rect x="767" y="402" width="3" height="3" fill="#1b1d22"/><rect x="767" y="405" width="3" height="3" fill="#1b1d22"/><rect x="767" y="408" width="3" height="3" fill="#1b1d22"/><rect x="767" y="411" width="3" height="3" fill="#1b1d22"/><rect x="767" y="414" width="3" height="3" fill="#1b1d22"/><rect x="767" y="417" width="3" height="3" fill="#1b1d22"/><rect x="767" y="420" width="3" height="3" fill="#1b1d22"/><rect x="767" y="423" width="3" height="3" fill="#1b1d22"/><rect x="767" y="426" width="3" height="3" fill="#1b1d22"/><rect x="767" y="429" width="3" height="3" fill="#1b1d22"/><rect x="761" y="432" width="3" height="3" fill="#1b1d22"/><rect x="764" y="432" width="3" height="3" fill="#1b1d22"/><rect x="767" y="432" width="3" height="3" fill="#1b1d22"/><rect x="770" y="432" width="3" height="3" fill="#1b1d22"/><rect x="773" y="432" width="3" height="3" fill="#1b1d22"/><rect x="761" y="435" width="3" height="3" fill="#1b1d22"/><rect x="767" y="435" width="3" height="3" fill="#1b1d22"/><rect x="773" y="435" width="3" height="3" fill="#1b1d22"/><rect x="830" y="399" width="3" height="3" fill="#1b1d22"/><rect x="833" y="399" width="3" height="3" fill="#1b1d22"/><rect x="836" y="399" width="3" height="3" fill="#1b1d22"/><rect x="839" y="399" width="3" height="3" fill="#1b1d22"/><rect x="842" y="399" width="3" height="3" fill="#1b1d22"/><rect x="836" y="402" width="3" height="3" fill="#1b1d22"/><rect x="836" y="405" width="3" height="3" fill="#1b1d22"/><rect x="836" y="408" width="3" height="3" fill="#1b1d22"/><rect x="836" y="411" width="3" height="3" fill="#1b1d22"/><rect x="836" y="414" width="3" height="3" fill="#1b1d22"/><rect x="836" y="417" width="3" height="3" fill="#1b1d22"/><rect x="836" y="420" width="3" height="3" fill="#1b1d22"/><rect x="836" y="423" width="3" height="3" fill="#1b1d22"/><rect x="836" y="426" width="3" height="3" fill="#1b1d22"/><rect x="836" y="429" width="3" height="3" fill="#1b1d22"/><rect x="830" y="432" width="3" height="3" fill="#1b1d22"/><rect x="833" y="432" width="3" height="3" fill="#1b1d22"/><rect x="836" y="432" width="3" height="3" fill="#1b1d22"/><rect x="839" y="432" width="3" height="3" fill="#1b1d22"/><rect x="842" y="432" width="3" height="3" fill="#1b1d22"/><rect x="830" y="435" width="3" height="3" fill="#1b1d22"/><rect x="836" y="435" width="3" height="3" fill="#1b1d22"/><rect x="842" y="435" width="3" height="3" fill="#1b1d22"/><rect x="746" y="351" width="3" height="3" fill="#f6a12e"/><rect x="746" y="357" width="3" height="3" fill="#f6a12e"/><rect x="755" y="345" width="3" height="3" fill="#f6a12e"/><rect x="755" y="348" width="3" height="3" fill="#f6a12e"/><rect x="767" y="354" width="3" height="3" fill="#f6a12e"/><rect x="770" y="351" width="3" height="3" fill="#f6a12e"/><rect x="779" y="342" width="3" height="3" fill="#f6a12e"/><rect x="779" y="348" width="3" height="3" fill="#f6a12e"/><rect x="788" y="354" width="3" height="3" fill="#f6a12e"/><rect x="788" y="357" width="3" height="3" fill="#f6a12e"/><rect x="836" y="375" width="3" height="3" fill="#f6a12e"/><rect x="836" y="381" width="3" height="3" fill="#f6a12e"/><rect x="1046" y="384" width="3" height="3" fill="#d3cfcc"/><rect x="1049" y="384" width="3" height="3" fill="#d3cfcc"/><rect x="1052" y="384" width="3" height="3" fill="#d3cfcc"/><rect x="1061" y="384" width="3" height="3" fill="#d3cfcc"/><rect x="1064" y="384" width="3" height="3" fill="#d3cfcc"/><rect x="1070" y="384" width="3" height="3" fill="#d3cfcc"/><rect x="1073" y="384" width="3" height="3" fill="#d3cfcc"/><rect x="1082" y="384" width="3" height="3" fill="#d3cfcc"/><rect x="1085" y="384" width="3" height="3" fill="#d3cfcc"/><rect x="1088" y="384" width="3" height="3" fill="#d3cfcc"/><rect x="1049" y="387" width="3" height="3" fill="#d3cfcc"/><rect x="1052" y="387" width="3" height="3" fill="#d3cfcc"/><rect x="1064" y="387" width="3" height="3" fill="#d3cfcc"/><rect x="1070" y="387" width="3" height="3" fill="#d3cfcc"/><rect x="1088" y="387" width="3" height="3" fill="#d3cfcc"/><rect x="1052" y="390" width="3" height="3" fill="#d3cfcc"/><rect x="1064" y="390" width="3" height="3" fill="#d3cfcc"/><rect x="1088" y="393" width="3" height="3" fill="#d3cfcc"/><rect x="1052" y="396" width="3" height="3" fill="#d3cfcc"/><rect x="1043" y="435" width="3" height="3" fill="#d3cfcc"/><rect x="1055" y="435" width="3" height="3" fill="#d3cfcc"/><rect x="1058" y="435" width="3" height="3" fill="#d3cfcc"/><rect x="1076" y="435" width="3" height="3" fill="#d3cfcc"/><rect x="1079" y="435" width="3" height="3" fill="#d3cfcc"/><rect x="1082" y="435" width="3" height="3" fill="#d3cfcc"/><rect x="1085" y="435" width="3" height="3" fill="#d3cfcc"/><rect x="1133" y="402" width="3" height="3" fill="#d3cfcc"/><rect x="1139" y="402" width="3" height="3" fill="#d3cfcc"/><rect x="1130" y="402" width="3" height="3" fill="#d3cfcc"/><rect x="1142" y="402" width="3" height="3" fill="#d3cfcc"/><rect x="1133" y="405" width="3" height="3" fill="#d3cfcc"/><rect x="1139" y="405" width="3" height="3" fill="#d3cfcc"/><rect x="1139" y="411" width="3" height="3" fill="#d3cfcc"/><rect x="1124" y="435" width="3" height="3" fill="#d3cfcc"/><rect x="1127" y="435" width="3" height="3" fill="#d3cfcc"/><rect x="1145" y="435" width="3" height="3" fill="#d3cfcc"/><rect x="1148" y="435" width="3" height="3" fill="#d3cfcc"/><rect x="1046" y="360" width="3" height="3" fill="#fbe4b3"/><rect x="1046" y="363" width="3" height="3" fill="#f1d9a8"/><rect x="1046" y="366" width="3" height="3" fill="#dcc597"/><rect x="1046" y="369" width="3" height="3" fill="#d2bb8c"/><rect x="1046" y="372" width="3" height="3" fill="#cab186"/><rect x="1055" y="351" width="3" height="3" fill="#fbe4b3"/><rect x="1055" y="354" width="3" height="3" fill="#f1d9a8"/><rect x="1055" y="357" width="3" height="3" fill="#dcc597"/><rect x="1055" y="360" width="3" height="3" fill="#d2bb8c"/><rect x="1055" y="363" width="3" height="3" fill="#cab186"/><rect x="1067" y="357" width="3" height="3" fill="#fbe4b3"/><rect x="1067" y="360" width="3" height="3" fill="#f1d9a8"/><rect x="1067" y="363" width="3" height="3" fill="#dcc597"/><rect x="1067" y="366" width="3" height="3" fill="#d2bb8c"/><rect x="1067" y="369" width="3" height="3" fill="#cab186"/><rect x="1079" y="351" width="3" height="3" fill="#fbe4b3"/><rect x="1079" y="354" width="3" height="3" fill="#f1d9a8"/><rect x="1079" y="357" width="3" height="3" fill="#dcc597"/><rect x="1079" y="360" width="3" height="3" fill="#d2bb8c"/><rect x="1079" y="363" width="3" height="3" fill="#cab186"/><rect x="1088" y="360" width="3" height="3" fill="#fbe4b3"/><rect x="1088" y="363" width="3" height="3" fill="#f1d9a8"/><rect x="1088" y="366" width="3" height="3" fill="#dcc597"/><rect x="1088" y="369" width="3" height="3" fill="#d2bb8c"/><rect x="1088" y="372" width="3" height="3" fill="#cab186"/><rect x="1133" y="384" width="3" height="3" fill="#fbe6b8"/><rect x="1136" y="384" width="3" height="3" fill="#fbe6b8"/><rect x="1139" y="384" width="3" height="3" fill="#fbe6b8"/><rect x="1133" y="387" width="3" height="3" fill="#f1dcae"/><rect x="1136" y="387" width="3" height="3" fill="#f9e7c0"/><rect x="1139" y="387" width="3" height="3" fill="#d9c293"/><rect x="1133" y="390" width="3" height="3" fill="#f1dcae"/><rect x="1136" y="390" width="3" height="3" fill="#f9e7c0"/><rect x="1139" y="390" width="3" height="3" fill="#d9c293"/><rect x="1133" y="393" width="3" height="3" fill="#f1dcae"/><rect x="1136" y="393" width="3" height="3" fill="#f9e7c0"/><rect x="1139" y="393" width="3" height="3" fill="#d9c293"/><rect x="1133" y="396" width="3" height="3" fill="#f1dcae"/><rect x="1136" y="396" width="3" height="3" fill="#f9e7c0"/><rect x="1139" y="396" width="3" height="3" fill="#d9c293"/><rect x="1052" y="366" width="3" height="3" fill="#1b1d22"/><rect x="1055" y="366" width="3" height="3" fill="#1b1d22"/><rect x="1058" y="366" width="3" height="3" fill="#1b1d22"/><rect x="1076" y="366" width="3" height="3" fill="#1b1d22"/><rect x="1079" y="366" width="3" height="3" fill="#1b1d22"/><rect x="1082" y="366" width="3" height="3" fill="#1b1d22"/><rect x="1055" y="369" width="3" height="3" fill="#1b1d22"/><rect x="1079" y="369" width="3" height="3" fill="#1b1d22"/><rect x="1055" y="372" width="3" height="3" fill="#1b1d22"/><rect x="1079" y="372" width="3" height="3" fill="#1b1d22"/><rect x="1055" y="375" width="3" height="3" fill="#1b1d22"/><rect x="1079" y="375" width="3" height="3" fill="#1b1d22"/><rect x="1055" y="378" width="3" height="3" fill="#1b1d22"/><rect x="1079" y="378" width="3" height="3" fill="#1b1d22"/><rect x="1064" y="372" width="3" height="3" fill="#1b1d22"/><rect x="1067" y="372" width="3" height="3" fill="#1b1d22"/><rect x="1070" y="372" width="3" height="3" fill="#1b1d22"/><rect x="1043" y="375" width="3" height="3" fill="#1b1d22"/><rect x="1046" y="375" width="3" height="3" fill="#1b1d22"/><rect x="1049" y="375" width="3" height="3" fill="#1b1d22"/><rect x="1085" y="375" width="3" height="3" fill="#1b1d22"/><rect x="1088" y="375" width="3" height="3" fill="#1b1d22"/><rect x="1091" y="375" width="3" height="3" fill="#1b1d22"/><rect x="1067" y="375" width="3" height="3" fill="#1b1d22"/><rect x="1067" y="378" width="3" height="3" fill="#1b1d22"/><rect x="1046" y="378" width="3" height="3" fill="#1b1d22"/><rect x="1088" y="378" width="3" height="3" fill="#1b1d22"/><rect x="1046" y="381" width="3" height="3" fill="#1b1d22"/><rect x="1049" y="381" width="3" height="3" fill="#1b1d22"/><rect x="1052" y="381" width="3" height="3" fill="#1b1d22"/><rect x="1055" y="381" width="3" height="3" fill="#1b1d22"/><rect x="1058" y="381" width="3" height="3" fill="#1b1d22"/><rect x="1061" y="381" width="3" height="3" fill="#1b1d22"/><rect x="1064" y="381" width="3" height="3" fill="#1b1d22"/><rect x="1067" y="381" width="3" height="3" fill="#1b1d22"/><rect x="1070" y="381" width="3" height="3" fill="#1b1d22"/><rect x="1073" y="381" width="3" height="3" fill="#1b1d22"/><rect x="1076" y="381" width="3" height="3" fill="#1b1d22"/><rect x="1079" y="381" width="3" height="3" fill="#1b1d22"/><rect x="1082" y="381" width="3" height="3" fill="#1b1d22"/><rect x="1085" y="381" width="3" height="3" fill="#1b1d22"/><rect x="1088" y="381" width="3" height="3" fill="#1b1d22"/><rect x="1067" y="384" width="3" height="3" fill="#1b1d22"/><rect x="1067" y="387" width="3" height="3" fill="#1b1d22"/><rect x="1067" y="390" width="3" height="3" fill="#1b1d22"/><rect x="1067" y="393" width="3" height="3" fill="#1b1d22"/><rect x="1067" y="396" width="3" height="3" fill="#1b1d22"/><rect x="1067" y="399" width="3" height="3" fill="#1b1d22"/><rect x="1067" y="402" width="3" height="3" fill="#1b1d22"/><rect x="1067" y="405" width="3" height="3" fill="#1b1d22"/><rect x="1067" y="408" width="3" height="3" fill="#1b1d22"/><rect x="1067" y="411" width="3" height="3" fill="#1b1d22"/><rect x="1067" y="414" width="3" height="3" fill="#1b1d22"/><rect x="1067" y="417" width="3" height="3" fill="#1b1d22"/><rect x="1067" y="420" width="3" height="3" fill="#1b1d22"/><rect x="1067" y="423" width="3" height="3" fill="#1b1d22"/><rect x="1067" y="426" width="3" height="3" fill="#1b1d22"/><rect x="1067" y="429" width="3" height="3" fill="#1b1d22"/><rect x="1061" y="432" width="3" height="3" fill="#1b1d22"/><rect x="1064" y="432" width="3" height="3" fill="#1b1d22"/><rect x="1067" y="432" width="3" height="3" fill="#1b1d22"/><rect x="1070" y="432" width="3" height="3" fill="#1b1d22"/><rect x="1073" y="432" width="3" height="3" fill="#1b1d22"/><rect x="1061" y="435" width="3" height="3" fill="#1b1d22"/><rect x="1067" y="435" width="3" height="3" fill="#1b1d22"/><rect x="1073" y="435" width="3" height="3" fill="#1b1d22"/><rect x="1130" y="399" width="3" height="3" fill="#1b1d22"/><rect x="1133" y="399" width="3" height="3" fill="#1b1d22"/><rect x="1136" y="399" width="3" height="3" fill="#1b1d22"/><rect x="1139" y="399" width="3" height="3" fill="#1b1d22"/><rect x="1142" y="399" width="3" height="3" fill="#1b1d22"/><rect x="1136" y="402" width="3" height="3" fill="#1b1d22"/><rect x="1136" y="405" width="3" height="3" fill="#1b1d22"/><rect x="1136" y="408" width="3" height="3" fill="#1b1d22"/><rect x="1136" y="411" width="3" height="3" fill="#1b1d22"/><rect x="1136" y="414" width="3" height="3" fill="#1b1d22"/><rect x="1136" y="417" width="3" height="3" fill="#1b1d22"/><rect x="1136" y="420" width="3" height="3" fill="#1b1d22"/><rect x="1136" y="423" width="3" height="3" fill="#1b1d22"/><rect x="1136" y="426" width="3" height="3" fill="#1b1d22"/><rect x="1136" y="429" width="3" height="3" fill="#1b1d22"/><rect x="1130" y="432" width="3" height="3" fill="#1b1d22"/><rect x="1133" y="432" width="3" height="3" fill="#1b1d22"/><rect x="1136" y="432" width="3" height="3" fill="#1b1d22"/><rect x="1139" y="432" width="3" height="3" fill="#1b1d22"/><rect x="1142" y="432" width="3" height="3" fill="#1b1d22"/><rect x="1130" y="435" width="3" height="3" fill="#1b1d22"/><rect x="1136" y="435" width="3" height="3" fill="#1b1d22"/><rect x="1142" y="435" width="3" height="3" fill="#1b1d22"/><rect x="1052" y="336" width="3" height="3" fill="#f6a12e"/><rect x="1052" y="339" width="3" height="3" fill="#f6a12e"/><rect x="1055" y="342" width="3" height="3" fill="#f6a12e"/><rect x="1055" y="348" width="3" height="3" fill="#f6a12e"/><rect x="1082" y="339" width="3" height="3" fill="#f6a12e"/><rect x="1079" y="342" width="3" height="3" fill="#f6a12e"/><rect x="1079" y="348" width="3" height="3" fill="#f6a12e"/><rect x="1064" y="351" width="3" height="3" fill="#f6a12e"/><rect x="1067" y="354" width="3" height="3" fill="#f6a12e"/><rect x="1046" y="354" width="3" height="3" fill="#f6a12e"/><rect x="1046" y="357" width="3" height="3" fill="#f6a12e"/><rect x="1088" y="357" width="3" height="3" fill="#f6a12e"/><rect x="1139" y="378" width="3" height="3" fill="#f6a12e"/><rect x="1136" y="381" width="3" height="3" fill="#f6a12e"/><rect x="146" y="684" width="3" height="3" fill="#d3cfcc"/><rect x="149" y="684" width="3" height="3" fill="#d3cfcc"/><rect x="152" y="684" width="3" height="3" fill="#d3cfcc"/><rect x="161" y="684" width="3" height="3" fill="#d3cfcc"/><rect x="164" y="684" width="3" height="3" fill="#d3cfcc"/><rect x="170" y="684" width="3" height="3" fill="#d3cfcc"/><rect x="173" y="684" width="3" height="3" fill="#d3cfcc"/><rect x="182" y="684" width="3" height="3" fill="#d3cfcc"/><rect x="185" y="684" width="3" height="3" fill="#d3cfcc"/><rect x="188" y="684" width="3" height="3" fill="#d3cfcc"/><rect x="146" y="660" width="3" height="3" fill="#fbe4b3"/><rect x="146" y="663" width="3" height="3" fill="#f1d9a8"/><rect x="146" y="666" width="3" height="3" fill="#dcc597"/><rect x="146" y="669" width="3" height="3" fill="#d2bb8c"/><rect x="146" y="672" width="3" height="3" fill="#cab186"/><rect x="155" y="651" width="3" height="3" fill="#fbe4b3"/><rect x="155" y="654" width="3" height="3" fill="#f1d9a8"/><rect x="155" y="657" width="3" height="3" fill="#dcc597"/><rect x="155" y="660" width="3" height="3" fill="#d2bb8c"/><rect x="155" y="663" width="3" height="3" fill="#cab186"/><rect x="167" y="657" width="3" height="3" fill="#fbe4b3"/><rect x="167" y="660" width="3" height="3" fill="#f1d9a8"/><rect x="167" y="663" width="3" height="3" fill="#dcc597"/><rect x="167" y="666" width="3" height="3" fill="#d2bb8c"/><rect x="167" y="669" width="3" height="3" fill="#cab186"/><rect x="179" y="651" width="3" height="3" fill="#fbe4b3"/><rect x="179" y="654" width="3" height="3" fill="#f1d9a8"/><rect x="179" y="657" width="3" height="3" fill="#dcc597"/><rect x="179" y="660" width="3" height="3" fill="#d2bb8c"/><rect x="179" y="663" width="3" height="3" fill="#cab186"/><rect x="188" y="660" width="3" height="3" fill="#fbe4b3"/><rect x="188" y="663" width="3" height="3" fill="#f1d9a8"/><rect x="188" y="666" width="3" height="3" fill="#dcc597"/><rect x="188" y="669" width="3" height="3" fill="#d2bb8c"/><rect x="188" y="672" width="3" height="3" fill="#cab186"/><rect x="233" y="684" width="3" height="3" fill="#fbe6b8"/><rect x="236" y="684" width="3" height="3" fill="#fbe6b8"/><rect x="239" y="684" width="3" height="3" fill="#fbe6b8"/><rect x="152" y="666" width="3" height="3" fill="#1b1d22"/><rect x="155" y="666" width="3" height="3" fill="#1b1d22"/><rect x="158" y="666" width="3" height="3" fill="#1b1d22"/><rect x="176" y="666" width="3" height="3" fill="#1b1d22"/><rect x="179" y="666" width="3" height="3" fill="#1b1d22"/><rect x="182" y="666" width="3" height="3" fill="#1b1d22"/><rect x="155" y="669" width="3" height="3" fill="#1b1d22"/><rect x="179" y="669" width="3" height="3" fill="#1b1d22"/><rect x="155" y="672" width="3" height="3" fill="#1b1d22"/><rect x="179" y="672" width="3" height="3" fill="#1b1d22"/><rect x="155" y="675" width="3" height="3" fill="#1b1d22"/><rect x="179" y="675" width="3" height="3" fill="#1b1d22"/><rect x="155" y="678" width="3" height="3" fill="#1b1d22"/><rect x="179" y="678" width="3" height="3" fill="#1b1d22"/><rect x="164" y="672" width="3" height="3" fill="#1b1d22"/><rect x="167" y="672" width="3" height="3" fill="#1b1d22"/><rect x="170" y="672" width="3" height="3" fill="#1b1d22"/><rect x="143" y="675" width="3" height="3" fill="#1b1d22"/><rect x="146" y="675" width="3" height="3" fill="#1b1d22"/><rect x="149" y="675" width="3" height="3" fill="#1b1d22"/><rect x="185" y="675" width="3" height="3" fill="#1b1d22"/><rect x="188" y="675" width="3" height="3" fill="#1b1d22"/><rect x="191" y="675" width="3" height="3" fill="#1b1d22"/><rect x="167" y="675" width="3" height="3" fill="#1b1d22"/><rect x="167" y="678" width="3" height="3" fill="#1b1d22"/><rect x="146" y="678" width="3" height="3" fill="#1b1d22"/><rect x="188" y="678" width="3" height="3" fill="#1b1d22"/><rect x="146" y="681" width="3" height="3" fill="#1b1d22"/><rect x="149" y="681" width="3" height="3" fill="#1b1d22"/><rect x="152" y="681" width="3" height="3" fill="#1b1d22"/><rect x="155" y="681" width="3" height="3" fill="#1b1d22"/><rect x="158" y="681" width="3" height="3" fill="#1b1d22"/><rect x="161" y="681" width="3" height="3" fill="#1b1d22"/><rect x="164" y="681" width="3" height="3" fill="#1b1d22"/><rect x="167" y="681" width="3" height="3" fill="#1b1d22"/><rect x="170" y="681" width="3" height="3" fill="#1b1d22"/><rect x="173" y="681" width="3" height="3" fill="#1b1d22"/><rect x="176" y="681" width="3" height="3" fill="#1b1d22"/><rect x="179" y="681" width="3" height="3" fill="#1b1d22"/><rect x="182" y="681" width="3" height="3" fill="#1b1d22"/><rect x="185" y="681" width="3" height="3" fill="#1b1d22"/><rect x="188" y="681" width="3" height="3" fill="#1b1d22"/><rect x="167" y="684" width="3" height="3" fill="#1b1d22"/><rect x="146" y="651" width="3" height="3" fill="#2fe0a6"/><rect x="146" y="657" width="3" height="3" fill="#2fe0a6"/><rect x="155" y="645" width="3" height="3" fill="#2fe0a6"/><rect x="155" y="648" width="3" height="3" fill="#2fe0a6"/><rect x="167" y="654" width="3" height="3" fill="#2fe0a6"/><rect x="170" y="651" width="3" height="3" fill="#2fe0a6"/><rect x="179" y="642" width="3" height="3" fill="#2fe0a6"/><rect x="179" y="648" width="3" height="3" fill="#2fe0a6"/><rect x="188" y="654" width="3" height="3" fill="#2fe0a6"/><rect x="188" y="657" width="3" height="3" fill="#2fe0a6"/><rect x="236" y="675" width="3" height="3" fill="#2fe0a6"/><rect x="236" y="681" width="3" height="3" fill="#2fe0a6"/><rect x="152" y="621" width="3" height="3" fill="#2fe0a6"/><rect x="173" y="627" width="3" height="3" fill="#2fe0a6"/><rect x="131" y="639" width="3" height="3" fill="#2fe0a6"/><rect x="122" y="633" width="3" height="3" fill="#2fe0a6"/><rect x="125" y="651" width="3" height="3" fill="#2fe0a6"/><rect x="215" y="651" width="3" height="3" fill="#2fe0a6"/><rect x="251" y="660" width="3" height="3" fill="#2fe0a6"/><rect x="257" y="666" width="3" height="3" fill="#2fe0a6"/><rect x="209" y="675" width="3" height="3" fill="#2fe0a6"/><rect x="239" y="645" width="3" height="3" fill="#2fe0a6"/><rect x="236" y="645" width="3" height="3" fill="#2fe0a6"/><rect x="242" y="645" width="3" height="3" fill="#2fe0a6"/><rect x="239" y="642" width="3" height="3" fill="#2fe0a6"/><rect x="239" y="648" width="3" height="3" fill="#2fe0a6"/><rect x="446" y="684" width="3" height="3" fill="#d3cfcc"/><rect x="449" y="684" width="3" height="3" fill="#d3cfcc"/><rect x="452" y="684" width="3" height="3" fill="#d3cfcc"/><rect x="461" y="684" width="3" height="3" fill="#d3cfcc"/><rect x="464" y="684" width="3" height="3" fill="#d3cfcc"/><rect x="470" y="684" width="3" height="3" fill="#d3cfcc"/><rect x="473" y="684" width="3" height="3" fill="#d3cfcc"/><rect x="482" y="684" width="3" height="3" fill="#d3cfcc"/><rect x="485" y="684" width="3" height="3" fill="#d3cfcc"/><rect x="488" y="684" width="3" height="3" fill="#d3cfcc"/><rect x="446" y="660" width="3" height="3" fill="#fbe4b3"/><rect x="446" y="663" width="3" height="3" fill="#f1d9a8"/><rect x="446" y="666" width="3" height="3" fill="#dcc597"/><rect x="446" y="669" width="3" height="3" fill="#d2bb8c"/><rect x="446" y="672" width="3" height="3" fill="#cab186"/><rect x="455" y="651" width="3" height="3" fill="#fbe4b3"/><rect x="455" y="654" width="3" height="3" fill="#f1d9a8"/><rect x="455" y="657" width="3" height="3" fill="#dcc597"/><rect x="455" y="660" width="3" height="3" fill="#d2bb8c"/><rect x="455" y="663" width="3" height="3" fill="#cab186"/><rect x="467" y="657" width="3" height="3" fill="#fbe4b3"/><rect x="467" y="660" width="3" height="3" fill="#f1d9a8"/><rect x="467" y="663" width="3" height="3" fill="#dcc597"/><rect x="467" y="666" width="3" height="3" fill="#d2bb8c"/><rect x="467" y="669" width="3" height="3" fill="#cab186"/><rect x="479" y="651" width="3" height="3" fill="#fbe4b3"/><rect x="479" y="654" width="3" height="3" fill="#f1d9a8"/><rect x="479" y="657" width="3" height="3" fill="#dcc597"/><rect x="479" y="660" width="3" height="3" fill="#d2bb8c"/><rect x="479" y="663" width="3" height="3" fill="#cab186"/><rect x="488" y="660" width="3" height="3" fill="#fbe4b3"/><rect x="488" y="663" width="3" height="3" fill="#f1d9a8"/><rect x="488" y="666" width="3" height="3" fill="#dcc597"/><rect x="488" y="669" width="3" height="3" fill="#d2bb8c"/><rect x="488" y="672" width="3" height="3" fill="#cab186"/><rect x="533" y="684" width="3" height="3" fill="#fbe6b8"/><rect x="536" y="684" width="3" height="3" fill="#fbe6b8"/><rect x="539" y="684" width="3" height="3" fill="#fbe6b8"/><rect x="452" y="666" width="3" height="3" fill="#1b1d22"/><rect x="455" y="666" width="3" height="3" fill="#1b1d22"/><rect x="458" y="666" width="3" height="3" fill="#1b1d22"/><rect x="476" y="666" width="3" height="3" fill="#1b1d22"/><rect x="479" y="666" width="3" height="3" fill="#1b1d22"/><rect x="482" y="666" width="3" height="3" fill="#1b1d22"/><rect x="455" y="669" width="3" height="3" fill="#1b1d22"/><rect x="479" y="669" width="3" height="3" fill="#1b1d22"/><rect x="455" y="672" width="3" height="3" fill="#1b1d22"/><rect x="479" y="672" width="3" height="3" fill="#1b1d22"/><rect x="455" y="675" width="3" height="3" fill="#1b1d22"/><rect x="479" y="675" width="3" height="3" fill="#1b1d22"/><rect x="455" y="678" width="3" height="3" fill="#1b1d22"/><rect x="479" y="678" width="3" height="3" fill="#1b1d22"/><rect x="464" y="672" width="3" height="3" fill="#1b1d22"/><rect x="467" y="672" width="3" height="3" fill="#1b1d22"/><rect x="470" y="672" width="3" height="3" fill="#1b1d22"/><rect x="443" y="675" width="3" height="3" fill="#1b1d22"/><rect x="446" y="675" width="3" height="3" fill="#1b1d22"/><rect x="449" y="675" width="3" height="3" fill="#1b1d22"/><rect x="485" y="675" width="3" height="3" fill="#1b1d22"/><rect x="488" y="675" width="3" height="3" fill="#1b1d22"/><rect x="491" y="675" width="3" height="3" fill="#1b1d22"/><rect x="467" y="675" width="3" height="3" fill="#1b1d22"/><rect x="467" y="678" width="3" height="3" fill="#1b1d22"/><rect x="446" y="678" width="3" height="3" fill="#1b1d22"/><rect x="488" y="678" width="3" height="3" fill="#1b1d22"/><rect x="446" y="681" width="3" height="3" fill="#1b1d22"/><rect x="449" y="681" width="3" height="3" fill="#1b1d22"/><rect x="452" y="681" width="3" height="3" fill="#1b1d22"/><rect x="455" y="681" width="3" height="3" fill="#1b1d22"/><rect x="458" y="681" width="3" height="3" fill="#1b1d22"/><rect x="461" y="681" width="3" height="3" fill="#1b1d22"/><rect x="464" y="681" width="3" height="3" fill="#1b1d22"/><rect x="467" y="681" width="3" height="3" fill="#1b1d22"/><rect x="470" y="681" width="3" height="3" fill="#1b1d22"/><rect x="473" y="681" width="3" height="3" fill="#1b1d22"/><rect x="476" y="681" width="3" height="3" fill="#1b1d22"/><rect x="479" y="681" width="3" height="3" fill="#1b1d22"/><rect x="482" y="681" width="3" height="3" fill="#1b1d22"/><rect x="485" y="681" width="3" height="3" fill="#1b1d22"/><rect x="488" y="681" width="3" height="3" fill="#1b1d22"/><rect x="467" y="684" width="3" height="3" fill="#1b1d22"/><rect x="452" y="636" width="3" height="3" fill="#2fe0a6"/><rect x="452" y="639" width="3" height="3" fill="#2fe0a6"/><rect x="455" y="642" width="3" height="3" fill="#2fe0a6"/><rect x="455" y="648" width="3" height="3" fill="#2fe0a6"/><rect x="446" y="651" width="3" height="3" fill="#2fe0a6"/><rect x="446" y="654" width="3" height="3" fill="#2fe0a6"/><rect x="464" y="651" width="3" height="3" fill="#2fe0a6"/><rect x="467" y="654" width="3" height="3" fill="#2fe0a6"/><rect x="479" y="642" width="3" height="3" fill="#2fe0a6"/><rect x="482" y="639" width="3" height="3" fill="#2fe0a6"/><rect x="479" y="648" width="3" height="3" fill="#2fe0a6"/><rect x="488" y="657" width="3" height="3" fill="#2fe0a6"/><rect x="539" y="678" width="3" height="3" fill="#2fe0a6"/><rect x="536" y="681" width="3" height="3" fill="#2fe0a6"/><rect x="446" y="615" width="3" height="3" fill="#2fe0a6"/><rect x="422" y="624" width="3" height="3" fill="#2fe0a6"/><rect x="434" y="624" width="3" height="3" fill="#2fe0a6"/><rect x="497" y="621" width="3" height="3" fill="#2fe0a6"/><rect x="428" y="642" width="3" height="3" fill="#2fe0a6"/><rect x="512" y="663" width="3" height="3" fill="#2fe0a6"/><rect x="536" y="645" width="3" height="3" fill="#2fe0a6"/><rect x="548" y="651" width="3" height="3" fill="#2fe0a6"/><rect x="557" y="657" width="3" height="3" fill="#2fe0a6"/><rect x="563" y="669" width="3" height="3" fill="#2fe0a6"/><rect x="416" y="660" width="3" height="3" fill="#2fe0a6"/><rect x="413" y="660" width="3" height="3" fill="#2fe0a6"/><rect x="419" y="660" width="3" height="3" fill="#2fe0a6"/><rect x="416" y="657" width="3" height="3" fill="#2fe0a6"/><rect x="416" y="663" width="3" height="3" fill="#2fe0a6"/><rect x="509" y="648" width="3" height="3" fill="#2fe0a6"/><rect x="506" y="651" width="3" height="3" fill="#2fe0a6"/><rect x="512" y="651" width="3" height="3" fill="#2fe0a6"/><rect x="509" y="654" width="3" height="3" fill="#2fe0a6"/><rect x="464" y="609" width="3" height="3" fill="#2fe0a6"/><rect x="467" y="609" width="3" height="3" fill="#2fe0a6"/><rect x="461" y="612" width="3" height="3" fill="#2fe0a6"/><rect x="470" y="612" width="3" height="3" fill="#2fe0a6"/><rect x="461" y="615" width="3" height="3" fill="#2fe0a6"/><rect x="470" y="615" width="3" height="3" fill="#2fe0a6"/><rect x="464" y="618" width="3" height="3" fill="#2fe0a6"/><rect x="467" y="618" width="3" height="3" fill="#2fe0a6"/><rect x="746" y="684" width="3" height="3" fill="#d3cfcc"/><rect x="749" y="684" width="3" height="3" fill="#d3cfcc"/><rect x="752" y="684" width="3" height="3" fill="#d3cfcc"/><rect x="761" y="684" width="3" height="3" fill="#d3cfcc"/><rect x="764" y="684" width="3" height="3" fill="#d3cfcc"/><rect x="770" y="684" width="3" height="3" fill="#d3cfcc"/><rect x="773" y="684" width="3" height="3" fill="#d3cfcc"/><rect x="782" y="684" width="3" height="3" fill="#d3cfcc"/><rect x="785" y="684" width="3" height="3" fill="#d3cfcc"/><rect x="788" y="684" width="3" height="3" fill="#d3cfcc"/><rect x="746" y="660" width="3" height="3" fill="#fbe4b3"/><rect x="746" y="663" width="3" height="3" fill="#f1d9a8"/><rect x="746" y="666" width="3" height="3" fill="#dcc597"/><rect x="746" y="669" width="3" height="3" fill="#d2bb8c"/><rect x="746" y="672" width="3" height="3" fill="#cab186"/><rect x="755" y="651" width="3" height="3" fill="#fbe4b3"/><rect x="755" y="654" width="3" height="3" fill="#f1d9a8"/><rect x="755" y="657" width="3" height="3" fill="#dcc597"/><rect x="755" y="660" width="3" height="3" fill="#d2bb8c"/><rect x="755" y="663" width="3" height="3" fill="#cab186"/><rect x="767" y="657" width="3" height="3" fill="#fbe4b3"/><rect x="767" y="660" width="3" height="3" fill="#f1d9a8"/><rect x="767" y="663" width="3" height="3" fill="#dcc597"/><rect x="767" y="666" width="3" height="3" fill="#d2bb8c"/><rect x="767" y="669" width="3" height="3" fill="#cab186"/><rect x="779" y="651" width="3" height="3" fill="#fbe4b3"/><rect x="779" y="654" width="3" height="3" fill="#f1d9a8"/><rect x="779" y="657" width="3" height="3" fill="#dcc597"/><rect x="779" y="660" width="3" height="3" fill="#d2bb8c"/><rect x="779" y="663" width="3" height="3" fill="#cab186"/><rect x="788" y="660" width="3" height="3" fill="#fbe4b3"/><rect x="788" y="663" width="3" height="3" fill="#f1d9a8"/><rect x="788" y="666" width="3" height="3" fill="#dcc597"/><rect x="788" y="669" width="3" height="3" fill="#d2bb8c"/><rect x="788" y="672" width="3" height="3" fill="#cab186"/><rect x="833" y="684" width="3" height="3" fill="#fbe6b8"/><rect x="836" y="684" width="3" height="3" fill="#fbe6b8"/><rect x="839" y="684" width="3" height="3" fill="#fbe6b8"/><rect x="752" y="666" width="3" height="3" fill="#1b1d22"/><rect x="755" y="666" width="3" height="3" fill="#1b1d22"/><rect x="758" y="666" width="3" height="3" fill="#1b1d22"/><rect x="776" y="666" width="3" height="3" fill="#1b1d22"/><rect x="779" y="666" width="3" height="3" fill="#1b1d22"/><rect x="782" y="666" width="3" height="3" fill="#1b1d22"/><rect x="755" y="669" width="3" height="3" fill="#1b1d22"/><rect x="779" y="669" width="3" height="3" fill="#1b1d22"/><rect x="755" y="672" width="3" height="3" fill="#1b1d22"/><rect x="779" y="672" width="3" height="3" fill="#1b1d22"/><rect x="755" y="675" width="3" height="3" fill="#1b1d22"/><rect x="779" y="675" width="3" height="3" fill="#1b1d22"/><rect x="755" y="678" width="3" height="3" fill="#1b1d22"/><rect x="779" y="678" width="3" height="3" fill="#1b1d22"/><rect x="764" y="672" width="3" height="3" fill="#1b1d22"/><rect x="767" y="672" width="3" height="3" fill="#1b1d22"/><rect x="770" y="672" width="3" height="3" fill="#1b1d22"/><rect x="743" y="675" width="3" height="3" fill="#1b1d22"/><rect x="746" y="675" width="3" height="3" fill="#1b1d22"/><rect x="749" y="675" width="3" height="3" fill="#1b1d22"/><rect x="785" y="675" width="3" height="3" fill="#1b1d22"/><rect x="788" y="675" width="3" height="3" fill="#1b1d22"/><rect x="791" y="675" width="3" height="3" fill="#1b1d22"/><rect x="767" y="675" width="3" height="3" fill="#1b1d22"/><rect x="767" y="678" width="3" height="3" fill="#1b1d22"/><rect x="746" y="678" width="3" height="3" fill="#1b1d22"/><rect x="788" y="678" width="3" height="3" fill="#1b1d22"/><rect x="746" y="681" width="3" height="3" fill="#1b1d22"/><rect x="749" y="681" width="3" height="3" fill="#1b1d22"/><rect x="752" y="681" width="3" height="3" fill="#1b1d22"/><rect x="755" y="681" width="3" height="3" fill="#1b1d22"/><rect x="758" y="681" width="3" height="3" fill="#1b1d22"/><rect x="761" y="681" width="3" height="3" fill="#1b1d22"/><rect x="764" y="681" width="3" height="3" fill="#1b1d22"/><rect x="767" y="681" width="3" height="3" fill="#1b1d22"/><rect x="770" y="681" width="3" height="3" fill="#1b1d22"/><rect x="773" y="681" width="3" height="3" fill="#1b1d22"/><rect x="776" y="681" width="3" height="3" fill="#1b1d22"/><rect x="779" y="681" width="3" height="3" fill="#1b1d22"/><rect x="782" y="681" width="3" height="3" fill="#1b1d22"/><rect x="785" y="681" width="3" height="3" fill="#1b1d22"/><rect x="788" y="681" width="3" height="3" fill="#1b1d22"/><rect x="767" y="684" width="3" height="3" fill="#1b1d22"/><rect x="743" y="654" width="3" height="3" fill="#2fe0a6"/><rect x="746" y="657" width="3" height="3" fill="#2fe0a6"/><rect x="755" y="642" width="3" height="3" fill="#2fe0a6"/><rect x="758" y="645" width="3" height="3" fill="#2fe0a6"/><rect x="755" y="648" width="3" height="3" fill="#2fe0a6"/><rect x="767" y="645" width="3" height="3" fill="#2fe0a6"/><rect x="767" y="651" width="3" height="3" fill="#2fe0a6"/><rect x="767" y="654" width="3" height="3" fill="#2fe0a6"/><rect x="779" y="642" width="3" height="3" fill="#2fe0a6"/><rect x="779" y="648" width="3" height="3" fill="#2fe0a6"/><rect x="788" y="651" width="3" height="3" fill="#2fe0a6"/><rect x="791" y="654" width="3" height="3" fill="#2fe0a6"/><rect x="788" y="657" width="3" height="3" fill="#2fe0a6"/><rect x="836" y="675" width="3" height="3" fill="#2fe0a6"/><rect x="833" y="678" width="3" height="3" fill="#2fe0a6"/><rect x="836" y="681" width="3" height="3" fill="#2fe0a6"/><rect x="722" y="624" width="3" height="3" fill="#2fe0a6"/><rect x="734" y="627" width="3" height="3" fill="#2fe0a6"/><rect x="758" y="621" width="3" height="3" fill="#2fe0a6"/><rect x="773" y="627" width="3" height="3" fill="#2fe0a6"/><rect x="719" y="645" width="3" height="3" fill="#2fe0a6"/><rect x="734" y="660" width="3" height="3" fill="#2fe0a6"/><rect x="719" y="669" width="3" height="3" fill="#2fe0a6"/><rect x="824" y="642" width="3" height="3" fill="#2fe0a6"/><rect x="845" y="645" width="3" height="3" fill="#2fe0a6"/><rect x="812" y="660" width="3" height="3" fill="#2fe0a6"/><rect x="860" y="660" width="3" height="3" fill="#2fe0a6"/><rect x="860" y="672" width="3" height="3" fill="#2fe0a6"/><rect x="797" y="627" width="3" height="3" fill="#2fe0a6"/><rect x="794" y="627" width="3" height="3" fill="#2fe0a6"/><rect x="800" y="627" width="3" height="3" fill="#2fe0a6"/><rect x="797" y="624" width="3" height="3" fill="#2fe0a6"/><rect x="797" y="630" width="3" height="3" fill="#2fe0a6"/><rect x="1046" y="684" width="3" height="3" fill="#d3cfcc"/><rect x="1049" y="684" width="3" height="3" fill="#d3cfcc"/><rect x="1052" y="684" width="3" height="3" fill="#d3cfcc"/><rect x="1061" y="684" width="3" height="3" fill="#d3cfcc"/><rect x="1064" y="684" width="3" height="3" fill="#d3cfcc"/><rect x="1070" y="684" width="3" height="3" fill="#d3cfcc"/><rect x="1073" y="684" width="3" height="3" fill="#d3cfcc"/><rect x="1082" y="684" width="3" height="3" fill="#d3cfcc"/><rect x="1085" y="684" width="3" height="3" fill="#d3cfcc"/><rect x="1088" y="684" width="3" height="3" fill="#d3cfcc"/><rect x="1046" y="660" width="3" height="3" fill="#fbe4b3"/><rect x="1046" y="663" width="3" height="3" fill="#f1d9a8"/><rect x="1046" y="666" width="3" height="3" fill="#dcc597"/><rect x="1046" y="669" width="3" height="3" fill="#d2bb8c"/><rect x="1046" y="672" width="3" height="3" fill="#cab186"/><rect x="1055" y="651" width="3" height="3" fill="#fbe4b3"/><rect x="1055" y="654" width="3" height="3" fill="#f1d9a8"/><rect x="1055" y="657" width="3" height="3" fill="#dcc597"/><rect x="1055" y="660" width="3" height="3" fill="#d2bb8c"/><rect x="1055" y="663" width="3" height="3" fill="#cab186"/><rect x="1067" y="657" width="3" height="3" fill="#fbe4b3"/><rect x="1067" y="660" width="3" height="3" fill="#f1d9a8"/><rect x="1067" y="663" width="3" height="3" fill="#dcc597"/><rect x="1067" y="666" width="3" height="3" fill="#d2bb8c"/><rect x="1067" y="669" width="3" height="3" fill="#cab186"/><rect x="1079" y="651" width="3" height="3" fill="#fbe4b3"/><rect x="1079" y="654" width="3" height="3" fill="#f1d9a8"/><rect x="1079" y="657" width="3" height="3" fill="#dcc597"/><rect x="1079" y="660" width="3" height="3" fill="#d2bb8c"/><rect x="1079" y="663" width="3" height="3" fill="#cab186"/><rect x="1088" y="660" width="3" height="3" fill="#fbe4b3"/><rect x="1088" y="663" width="3" height="3" fill="#f1d9a8"/><rect x="1088" y="666" width="3" height="3" fill="#dcc597"/><rect x="1088" y="669" width="3" height="3" fill="#d2bb8c"/><rect x="1088" y="672" width="3" height="3" fill="#cab186"/><rect x="1133" y="684" width="3" height="3" fill="#fbe6b8"/><rect x="1136" y="684" width="3" height="3" fill="#fbe6b8"/><rect x="1139" y="684" width="3" height="3" fill="#fbe6b8"/><rect x="1052" y="666" width="3" height="3" fill="#1b1d22"/><rect x="1055" y="666" width="3" height="3" fill="#1b1d22"/><rect x="1058" y="666" width="3" height="3" fill="#1b1d22"/><rect x="1076" y="666" width="3" height="3" fill="#1b1d22"/><rect x="1079" y="666" width="3" height="3" fill="#1b1d22"/><rect x="1082" y="666" width="3" height="3" fill="#1b1d22"/><rect x="1055" y="669" width="3" height="3" fill="#1b1d22"/><rect x="1079" y="669" width="3" height="3" fill="#1b1d22"/><rect x="1055" y="672" width="3" height="3" fill="#1b1d22"/><rect x="1079" y="672" width="3" height="3" fill="#1b1d22"/><rect x="1055" y="675" width="3" height="3" fill="#1b1d22"/><rect x="1079" y="675" width="3" height="3" fill="#1b1d22"/><rect x="1055" y="678" width="3" height="3" fill="#1b1d22"/><rect x="1079" y="678" width="3" height="3" fill="#1b1d22"/><rect x="1064" y="672" width="3" height="3" fill="#1b1d22"/><rect x="1067" y="672" width="3" height="3" fill="#1b1d22"/><rect x="1070" y="672" width="3" height="3" fill="#1b1d22"/><rect x="1043" y="675" width="3" height="3" fill="#1b1d22"/><rect x="1046" y="675" width="3" height="3" fill="#1b1d22"/><rect x="1049" y="675" width="3" height="3" fill="#1b1d22"/><rect x="1085" y="675" width="3" height="3" fill="#1b1d22"/><rect x="1088" y="675" width="3" height="3" fill="#1b1d22"/><rect x="1091" y="675" width="3" height="3" fill="#1b1d22"/><rect x="1067" y="675" width="3" height="3" fill="#1b1d22"/><rect x="1067" y="678" width="3" height="3" fill="#1b1d22"/><rect x="1046" y="678" width="3" height="3" fill="#1b1d22"/><rect x="1088" y="678" width="3" height="3" fill="#1b1d22"/><rect x="1046" y="681" width="3" height="3" fill="#1b1d22"/><rect x="1049" y="681" width="3" height="3" fill="#1b1d22"/><rect x="1052" y="681" width="3" height="3" fill="#1b1d22"/><rect x="1055" y="681" width="3" height="3" fill="#1b1d22"/><rect x="1058" y="681" width="3" height="3" fill="#1b1d22"/><rect x="1061" y="681" width="3" height="3" fill="#1b1d22"/><rect x="1064" y="681" width="3" height="3" fill="#1b1d22"/><rect x="1067" y="681" width="3" height="3" fill="#1b1d22"/><rect x="1070" y="681" width="3" height="3" fill="#1b1d22"/><rect x="1073" y="681" width="3" height="3" fill="#1b1d22"/><rect x="1076" y="681" width="3" height="3" fill="#1b1d22"/><rect x="1079" y="681" width="3" height="3" fill="#1b1d22"/><rect x="1082" y="681" width="3" height="3" fill="#1b1d22"/><rect x="1085" y="681" width="3" height="3" fill="#1b1d22"/><rect x="1088" y="681" width="3" height="3" fill="#1b1d22"/><rect x="1067" y="684" width="3" height="3" fill="#1b1d22"/><rect x="1046" y="651" width="3" height="3" fill="#2fe0a6"/><rect x="1046" y="657" width="3" height="3" fill="#2fe0a6"/><rect x="1055" y="645" width="3" height="3" fill="#2fe0a6"/><rect x="1055" y="648" width="3" height="3" fill="#2fe0a6"/><rect x="1070" y="651" width="3" height="3" fill="#2fe0a6"/><rect x="1067" y="654" width="3" height="3" fill="#2fe0a6"/><rect x="1079" y="642" width="3" height="3" fill="#2fe0a6"/><rect x="1079" y="648" width="3" height="3" fill="#2fe0a6"/><rect x="1088" y="654" width="3" height="3" fill="#2fe0a6"/><rect x="1088" y="657" width="3" height="3" fill="#2fe0a6"/><rect x="1136" y="675" width="3" height="3" fill="#2fe0a6"/><rect x="1136" y="681" width="3" height="3" fill="#2fe0a6"/><rect x="1076" y="609" width="3" height="3" fill="#2fe0a6"/><rect x="1064" y="618" width="3" height="3" fill="#2fe0a6"/><rect x="1085" y="624" width="3" height="3" fill="#2fe0a6"/><rect x="1109" y="621" width="3" height="3" fill="#2fe0a6"/><rect x="1136" y="627" width="3" height="3" fill="#2fe0a6"/><rect x="1025" y="636" width="3" height="3" fill="#2fe0a6"/><rect x="1037" y="645" width="3" height="3" fill="#2fe0a6"/><rect x="1016" y="651" width="3" height="3" fill="#2fe0a6"/><rect x="1013" y="675" width="3" height="3" fill="#2fe0a6"/><rect x="1106" y="642" width="3" height="3" fill="#2fe0a6"/><rect x="1151" y="642" width="3" height="3" fill="#2fe0a6"/><rect x="1163" y="639" width="3" height="3" fill="#2fe0a6"/><rect x="1118" y="651" width="3" height="3" fill="#2fe0a6"/><rect x="1187" y="678" width="3" height="3" fill="#2fe0a6"/><rect x="1109" y="681" width="3" height="3" fill="#2fe0a6"/><rect x="1106" y="681" width="3" height="3" fill="#2fe0a6"/><rect x="1112" y="681" width="3" height="3" fill="#2fe0a6"/><rect x="1037" y="627" width="3" height="3" fill="#2fe0a6"/><rect x="1034" y="627" width="3" height="3" fill="#2fe0a6"/><rect x="1040" y="627" width="3" height="3" fill="#2fe0a6"/><rect x="1037" y="624" width="3" height="3" fill="#2fe0a6"/><rect x="1037" y="630" width="3" height="3" fill="#2fe0a6"/><rect x="1121" y="636" width="3" height="3" fill="#2fe0a6"/><rect x="1118" y="639" width="3" height="3" fill="#2fe0a6"/><rect x="1124" y="639" width="3" height="3" fill="#2fe0a6"/><rect x="1121" y="642" width="3" height="3" fill="#2fe0a6"/><rect x="1169" y="660" width="3" height="3" fill="#2fe0a6"/><rect x="1166" y="660" width="3" height="3" fill="#2fe0a6"/><rect x="1172" y="660" width="3" height="3" fill="#2fe0a6"/><rect x="1169" y="657" width="3" height="3" fill="#2fe0a6"/><rect x="1169" y="663" width="3" height="3" fill="#2fe0a6"/><rect x="710" y="555" width="3" height="3" fill="#000"/><rect x="332" y="270" width="1" height="415" fill="#959595"/><rect x="632" y="270" width="1" height="415" fill="#959595"/><rect x="932" y="270" width="1" height="415" fill="#959595"/><rect x="1232" y="270" width="1" height="415" fill="#959595"/><rect x="124" y="570" width="1176" height="1" fill="#959595"/><path d="M1082 270H1232V570H1082" fill="none" stroke="#df8a2e" stroke-width="2"/></g></svg>
<div style="left:120px;top:685px;width:1192px;height:5px;background:#4a4a4a"></div>
<div style="left:120px;top:690px;width:1192px;height:8px;background:#777"></div>
<div style="left:120px;top:698px;width:240px;height:211px;background:#555"></div>
<div class="ph" style="left:120px;top:698px;width:240px;height:17px"></div>
<div class="t" style="left:120px;top:700.5px;font-size:12px;color:#e6e6e6;"><span style="display:inline-block;width:240px;text-align:center">Animations</span></div>
<div style="left:120px;top:715px;width:225px;height:167px;background:#454545"></div>
<div style="left:120px;top:715px;width:199px;height:30px;background:#222"></div>
<div class="t" style="left:123px;top:723.5px;font-size:12px;color:#ececec;">Animation 1</div>
<div class="btn" style="left:320px;top:716px;width:24.5px;height:29px"></div>
<div class="t" style="left:123px;top:753.5px;font-size:12px;color:#ececec;">Malen_Anim</div>
<div class="btn" style="left:320px;top:746px;width:24.5px;height:29px"></div>
<div class="t" style="left:123px;top:783.5px;font-size:12px;color:#ececec;">Schrank_Linie</div>
<div class="btn" style="left:320px;top:776px;width:24.5px;height:29px"></div>
<div class="t" style="left:123px;top:813.5px;font-size:12px;color:#ececec;">Schrank_Door_Anim</div>
<div class="btn" style="left:320px;top:806px;width:24.5px;height:29px"></div>
<div class="t" style="left:123px;top:843.5px;font-size:12px;color:#ececec;">Car_Door_Anim</div>
<div class="btn" style="left:320px;top:836px;width:24.5px;height:29px"></div>
<div class="t" style="left:123px;top:873.5px;font-size:12px;color:#ececec;">Door_Vertical</div>
<div class="btn" style="left:320px;top:866px;width:24.5px;height:29px"></div>
<div style="left:120px;top:882px;width:240px;height:27px;background:#555;border-top:1px solid #3a3a3a"></div>
<div class="btn" style="left:122px;top:884px;width:24px;height:23px"></div>
<div class="btn" style="left:148px;top:884px;width:24px;height:23px"></div>
<div class="btn" style="left:174px;top:884px;width:24px;height:23px"></div>
<div style="left:360px;top:698px;width:5px;height:211px;background:#777"></div>
<div style="left:365px;top:698px;width:614px;height:211px;background:#555"></div>
<div class="ph" style="left:365px;top:698px;width:614px;height:17px"></div>
<div class="t" style="left:366px;top:700.5px;font-size:12px;color:#e6e6e6;"><span style="display:inline-block;width:613px;text-align:center">Frame edit</span></div>
<div style="left:366px;top:715px;width:27px;height:167px;border-right:1px solid #3c3c3c"></div>
<div class="btn" style="left:366.5px;top:716px;width:25px;height:24px"></div>
<div class="btn" style="left:366.5px;top:742px;width:25px;height:24px"></div>
<div class="btn" style="left:366.5px;top:768px;width:25px;height:24px"></div>
<div style="left:365px;top:882px;width:614px;height:27px;background:#555;border-top:1px solid #3a3a3a"></div>
<div class="t" style="left:373px;top:891.5px;font-size:12px;color:#e0e0e0;">Frame time</div>
<div class="dd" style="left:440px;top:888px;width:60px;height:20px"></div>
<div class="t" style="left:446px;top:891.5px;font-size:12px;color:#ececec;">100</div>
<svg style="left:485px;top:890px;" width="10" height="16" viewBox="0 0 10 16"><path d="M1 6H9L5 1.5Z M1 9H9L5 13.5Z" fill="#c8c8c8"/></svg>
<div class="btn" style="left:507px;top:884px;width:25px;height:24px"></div>
<div class="btn" style="left:532.5px;top:884px;width:25px;height:24px"></div>
<div style="left:558px;top:890px;width:93px;height:10px;background:#333;border-radius:5px"></div>
<div style="left:558px;top:888px;width:14px;height:14px;background:radial-gradient(circle at 50% 35%,#d4d4d4,#8a8a8a);border-radius:50%;border:1px solid #aaa"></div>
<div class="t" style="left:661px;top:889px;font-size:12px;color:#e0e0e0;">1/6</div>
<div class="btn" style="left:688.5px;top:884px;width:25px;height:24px"></div>
<div class="btn" style="left:715px;top:884px;width:25px;height:24px"></div>
<div style="left:979px;top:698px;width:6px;height:211px;background:#777"></div>
<div style="left:985px;top:698px;width:319px;height:211px;background:#333"></div>
<div class="ph" style="left:985px;top:698px;width:319px;height:17px"></div>
<div class="t" style="left:985px;top:700.5px;font-size:12px;color:#e6e6e6;"><span style="display:inline-block;width:319px;text-align:center">Playback</span></div>
<div style="left:985px;top:883px;width:319px;height:26px;background:#555"></div>
<div class="btn" style="left:987px;top:884px;width:24px;height:23px"></div>
<div class="btnd" style="left:1012.5px;top:884px;width:25px;height:23px"></div>
<div class="btn" style="left:1039px;top:884px;width:24px;height:23px"></div>
<div class="btn" style="left:1065px;top:884px;width:24px;height:23px"></div>
<div class="btn" style="left:342px;top:700px;width:16px;height:14px"></div>
<div class="btn" style="left:961px;top:700px;width:16px;height:14px"></div>
<div class="btn" style="left:1287px;top:700px;width:16px;height:14px"></div>
<div style="left:1304px;top:125px;width:8px;height:784px;background:#777"></div>
<div style="left:1312px;top:125px;width:184px;height:784px;background:#777"></div>
<div class="ph" style="left:1312px;top:125px;width:184px;height:17px"></div>
<div class="t" style="left:1312px;top:128px;font-size:12px;color:#e6e6e6;"><span style="display:inline-block;width:184px;text-align:center">Preview (0.125x)</span></div>
<div style="left:1312px;top:142px;width:184px;height:26px;background:#555"></div>
<div class="btn" style="left:1314px;top:143px;width:24px;height:24px"></div>
<div class="btn" style="left:1340px;top:143px;width:24px;height:24px"></div>
<div class="btn" style="left:1366px;top:143px;width:24px;height:24px"></div>
<div style="left:1312px;top:168px;width:184px;height:156px;background:#333"></div>
<div class="ph" style="left:1312px;top:330px;width:184px;height:17px"></div>
<div class="t" style="left:1312px;top:333px;font-size:12px;color:#e6e6e6;"><span style="display:inline-block;width:184px;text-align:center">Palette</span></div>
<div style="left:1312px;top:347px;width:184px;height:82px;background:#5a5a5a"></div>
<div class="btn" style="left:1314px;top:348px;width:24px;height:24px"></div>
<div class="btn" style="left:1340px;top:348px;width:25px;height:24px"></div>
<div style="left:1366px;top:348px;width:77px;height:25px;background:#606060"></div>
<div class="btn" style="left:1444px;top:348px;width:24px;height:24px"></div>
<div class="btn" style="left:1470px;top:348px;width:24px;height:24px"></div>
<div style="left:1312px;top:373px;width:184px;height:1px;background:#383838"></div>
<div style="left:1314px;top:375px;width:130px;height:33px;background:#444"></div>
<div style="left:1315px;top:376px;width:15px;height:15px;background:#000000"></div>
<div style="left:1331px;top:376px;width:15px;height:15px;background:#ffffff"></div>
<div style="left:1347px;top:376px;width:15px;height:15px;background:#a3a3a3"></div>
<div style="left:1363px;top:376px;width:15px;height:15px;background:#ef5b85"></div>
<div style="left:1379px;top:376px;width:15px;height:15px;background:#d0011b"></div>
<div style="left:1395px;top:376px;width:15px;height:15px;background:#4b3a27"></div>
<div style="left:1411px;top:376px;width:15px;height:15px;background:#a85f10"></div>
<div style="left:1427px;top:376px;width:15px;height:15px;background:#ff8700"></div>
<div style="left:1315px;top:392px;width:15px;height:15px;background:#f6e35c"></div>
<div style="left:1331px;top:392px;width:15px;height:15px;background:#8fd81f"></div>
<div style="left:1347px;top:392px;width:15px;height:15px;background:#00921e"></div>
<div style="left:1363px;top:392px;width:15px;height:15px;background:#26474d"></div>
<div style="left:1379px;top:392px;width:15px;height:15px;background:#1a2334"></div>
<div style="left:1395px;top:392px;width:15px;height:15px;background:#04578c"></div>
<div style="left:1411px;top:392px;width:15px;height:15px;background:#05a1f1"></div>
<div style="left:1427px;top:392px;width:15px;height:15px;background:#a7dcf1"></div>
<div style="left:1314px;top:375px;width:17px;height:17px;border:1px solid #fff;background:#000"></div>
<div style="left:1317px;top:378px;width:11px;height:11px;border:1px solid #fff"></div>
<div style="left:1314px;top:415px;width:167px;height:14px;background:#6a6a6a"></div>
<div style="left:1481px;top:375px;width:14px;height:40px;background:#6a6a6a"></div>
<div class="ph" style="left:1312px;top:435px;width:184px;height:17px"></div>
<div class="t" style="left:1312px;top:438px;font-size:12px;color:#e6e6e6;"><span style="display:inline-block;width:184px;text-align:center">Tiles</span></div>
<div class="ph" style="left:1312px;top:457px;width:184px;height:17px"></div>
<div class="t" style="left:1312px;top:460px;font-size:12px;color:#e6e6e6;"><span style="display:inline-block;width:184px;text-align:center">Layers</span></div>
<div style="left:1312px;top:474px;width:184px;height:27px;background:#555"></div>
<div class="btn" style="left:1314px;top:475px;width:24px;height:24px"></div>
<div class="btn" style="left:1340px;top:475px;width:24px;height:24px"></div>
<div class="btn" style="left:1366px;top:475px;width:24px;height:24px"></div>
<div class="btn" style="left:1392px;top:475px;width:24px;height:24px"></div>
<div class="btn" style="left:1418px;top:475px;width:24px;height:24px"></div>
<div style="left:1312px;top:501px;width:184px;height:96px;background:#454545"></div>
<div class="btn" style="left:1314px;top:509px;width:24px;height:29px"></div>
<div class="btn" style="left:1340px;top:509px;width:24px;height:29px"></div>
<div class="t" style="left:1366px;top:518px;font-size:12px;color:#e6e6e6;"><span style="display:inline-block;width:80px;text-align:center">Guy_Arm_a...</span></div>
<div class="btn" style="left:1314px;top:539px;width:24px;height:29px"></div>
<div class="btn" style="left:1340px;top:539px;width:24px;height:29px"></div>
<div class="t" style="left:1368px;top:548px;font-size:12px;color:#e6e6e6;"><span style="display:inline-block;width:80px;text-align:center">Guy_Arm_anim</span></div>
<div class="btn" style="left:1314px;top:569px;width:24px;height:29px"></div>
<div class="btn" style="left:1340px;top:569px;width:24px;height:29px"></div>
<div class="t" style="left:1368px;top:578px;font-size:12px;color:#e6e6e6;"><span style="display:inline-block;width:80px;text-align:center">Car wreck</span></div>
<div style="left:1481px;top:501px;width:14px;height:96px;background:#6a6a6a"></div>
<div style="left:1312px;top:501px;width:169px;height:8px;overflow:hidden"><div class="btn" style="left:2px;top:-21px;width:24px;height:29px"></div><div class="btn" style="left:28px;top:-21px;width:24px;height:29px"></div></div>
<div style="left:1351px;top:502px;width:2px;height:3px;background:#fff"></div>
<div class="ph" style="left:1312px;top:604px;width:184px;height:15px"></div>
<div class="t" style="left:1312px;top:606px;font-size:12px;color:#e6e6e6;"><span style="display:inline-block;width:184px;text-align:center">Info</span></div>
<div style="left:1312px;top:619px;width:184px;height:183px;background:#555"></div>
<div style="left:1312px;top:604px;width:184px;height:198px;border:1px solid #111"></div>
<div class="t" style="left:1315px;top:623px;font-size:10px;color:#e6e6e6;">Size: 1100,500</div>
<div class="t" style="left:1406px;top:623px;font-size:10px;color:#e6e6e6;">Zoom: 3x</div>
<div class="t" style="left:1315px;top:638px;font-size:10px;color:#e6e6e6;">Pos: 426,95</div>
<div class="t" style="left:1406px;top:638px;font-size:10px;color:#e6e6e6;">Tile: 4,0 (4)</div>
<div class="t" style="left:1315px;top:653px;font-size:10px;color:#e6e6e6;">Pos in tile: 26,95</div>
<div class="t" style="left:1406px;top:653px;font-size:10px;color:#e6e6e6;">Tile ref: X</div>
<div class="btn" style="left:1314px;top:126px;width:16px;height:14px"></div>
<div class="btn" style="left:1478px;top:126px;width:16px;height:14px"></div>
<div class="btn" style="left:1314px;top:331px;width:16px;height:14px"></div>
<div class="btn" style="left:1478px;top:331px;width:16px;height:14px"></div>
<div class="btn" style="left:1314px;top:436px;width:16px;height:14px"></div>
<div class="btn" style="left:1478px;top:436px;width:16px;height:14px"></div>
<div class="btn" style="left:1314px;top:458px;width:16px;height:14px"></div>
<div class="btn" style="left:1478px;top:458px;width:16px;height:14px"></div>
<div class="btn" style="left:1314px;top:605px;width:16px;height:14px"></div>
<div class="btn" style="left:1478px;top:605px;width:16px;height:14px"></div>
<svg style="left:0;top:0" width="1552" height="989" viewBox="0 0 1552 989"><defs><pattern id="p1" width="8" height="8" x="636" y="749" patternUnits="userSpaceOnUse"><rect width="8" height="8" fill="#e4e4e4"/><path d="M0 0h1v1h-1zM1 0h1v1h-1zM6 0h1v1h-1zM7 0h1v1h-1zM0 1h1v1h-1zM5 1h1v1h-1zM6 1h1v1h-1zM7 1h1v1h-1zM4 2h1v1h-1zM5 2h1v1h-1zM6 2h1v1h-1zM7 2h1v1h-1zM3 3h1v1h-1zM4 3h1v1h-1zM5 3h1v1h-1zM6 3h1v1h-1zM2 4h1v1h-1zM3 4h1v1h-1zM4 4h1v1h-1zM5 4h1v1h-1zM1 5h1v1h-1zM2 5h1v1h-1zM3 5h1v1h-1zM4 5h1v1h-1zM0 6h1v1h-1zM1 6h1v1h-1zM2 6h1v1h-1zM3 6h1v1h-1zM0 7h1v1h-1zM1 7h1v1h-1zM2 7h1v1h-1zM7 7h1v1h-1z" fill="#f5f5f5" shape-rendering="crispEdges"/></pattern><pattern id="p2" width="8" height="8" x="1095" y="749" patternUnits="userSpaceOnUse"><rect width="8" height="8" fill="#e4e4e4"/><path d="M0 0h1v1h-1zM1 0h1v1h-1zM6 0h1v1h-1zM7 0h1v1h-1zM0 1h1v1h-1zM5 1h1v1h-1zM6 1h1v1h-1zM7 1h1v1h-1zM4 2h1v1h-1zM5 2h1v1h-1zM6 2h1v1h-1zM7 2h1v1h-1zM3 3h1v1h-1zM4 3h1v1h-1zM5 3h1v1h-1zM6 3h1v1h-1zM2 4h1v1h-1zM3 4h1v1h-1zM4 4h1v1h-1zM5 4h1v1h-1zM1 5h1v1h-1zM2 5h1v1h-1zM3 5h1v1h-1zM4 5h1v1h-1zM0 6h1v1h-1zM1 6h1v1h-1zM2 6h1v1h-1zM3 6h1v1h-1zM0 7h1v1h-1zM1 7h1v1h-1zM2 7h1v1h-1zM7 7h1v1h-1z" fill="#f5f5f5" shape-rendering="crispEdges"/></pattern><pattern id="p3" width="8" height="8" x="1335" y="215" patternUnits="userSpaceOnUse"><rect width="8" height="8" fill="#e4e4e4"/><path d="M0 0h1v1h-1zM1 0h1v1h-1zM6 0h1v1h-1zM7 0h1v1h-1zM0 1h1v1h-1zM5 1h1v1h-1zM6 1h1v1h-1zM7 1h1v1h-1zM4 2h1v1h-1zM5 2h1v1h-1zM6 2h1v1h-1zM7 2h1v1h-1zM3 3h1v1h-1zM4 3h1v1h-1zM5 3h1v1h-1zM6 3h1v1h-1zM2 4h1v1h-1zM3 4h1v1h-1zM4 4h1v1h-1zM5 4h1v1h-1zM1 5h1v1h-1zM2 5h1v1h-1zM3 5h1v1h-1zM4 5h1v1h-1zM0 6h1v1h-1zM1 6h1v1h-1zM2 6h1v1h-1zM3 6h1v1h-1zM0 7h1v1h-1zM1 7h1v1h-1zM2 7h1v1h-1zM7 7h1v1h-1z" fill="#f5f5f5" shape-rendering="crispEdges"/></pattern><pattern id="p4" width="8" height="8" x="1452" y="509" patternUnits="userSpaceOnUse"><rect width="8" height="8" fill="#e4e4e4"/><path d="M0 0h1v1h-1zM1 0h1v1h-1zM6 0h1v1h-1zM7 0h1v1h-1zM0 1h1v1h-1zM5 1h1v1h-1zM6 1h1v1h-1zM7 1h1v1h-1zM4 2h1v1h-1zM5 2h1v1h-1zM6 2h1v1h-1zM7 2h1v1h-1zM3 3h1v1h-1zM4 3h1v1h-1zM5 3h1v1h-1zM6 3h1v1h-1zM2 4h1v1h-1zM3 4h1v1h-1zM4 4h1v1h-1zM5 4h1v1h-1zM1 5h1v1h-1zM2 5h1v1h-1zM3 5h1v1h-1zM4 5h1v1h-1zM0 6h1v1h-1zM1 6h1v1h-1zM2 6h1v1h-1zM3 6h1v1h-1zM0 7h1v1h-1zM1 7h1v1h-1zM2 7h1v1h-1zM7 7h1v1h-1z" fill="#f5f5f5" shape-rendering="crispEdges"/></pattern></defs><rect x="636" y="749" width="100" height="100" fill="url(#p1)"/><rect x="1095" y="749" width="100" height="100" fill="url(#p2)"/><rect x="1335" y="215" width="138" height="63" fill="url(#p3)"/><rect x="1452" y="509" width="29" height="13" fill="url(#p4)"/><rect x="1452" y="539" width="29" height="13" fill="url(#p4)"/><rect x="1452" y="569" width="29" height="13" fill="url(#p4)"/><rect x="1364.5" y="210.5" width="49" height="22" fill="none" stroke="#e01010" stroke-width="1"/><rect x="674" y="787" width="1" height="1" fill="#ddd9d6"/><rect x="675" y="787" width="1" height="1" fill="#ddd9d6"/><rect x="676" y="787" width="1" height="1" fill="#ddd9d6"/><rect x="679" y="787" width="1" height="1" fill="#ddd9d6"/><rect x="680" y="787" width="1" height="1" fill="#ddd9d6"/><rect x="682" y="787" width="1" height="1" fill="#ddd9d6"/><rect x="683" y="787" width="1" height="1" fill="#ddd9d6"/><rect x="686" y="787" width="1" height="1" fill="#ddd9d6"/><rect x="687" y="787" width="1" height="1" fill="#ddd9d6"/><rect x="688" y="787" width="1" height="1" fill="#ddd9d6"/><rect x="675" y="788" width="1" height="1" fill="#ddd9d6"/><rect x="676" y="788" width="1" height="1" fill="#ddd9d6"/><rect x="680" y="788" width="1" height="1" fill="#ddd9d6"/><rect x="682" y="788" width="1" height="1" fill="#ddd9d6"/><rect x="688" y="788" width="1" height="1" fill="#ddd9d6"/><rect x="676" y="789" width="1" height="1" fill="#ddd9d6"/><rect x="680" y="789" width="1" height="1" fill="#ddd9d6"/><rect x="688" y="790" width="1" height="1" fill="#ddd9d6"/><rect x="676" y="791" width="1" height="1" fill="#ddd9d6"/><rect x="673" y="804" width="1" height="1" fill="#ddd9d6"/><rect x="677" y="804" width="1" height="1" fill="#ddd9d6"/><rect x="678" y="804" width="1" height="1" fill="#ddd9d6"/><rect x="684" y="804" width="1" height="1" fill="#ddd9d6"/><rect x="685" y="804" width="1" height="1" fill="#ddd9d6"/><rect x="686" y="804" width="1" height="1" fill="#ddd9d6"/><rect x="687" y="804" width="1" height="1" fill="#ddd9d6"/><rect x="703" y="793" width="1" height="1" fill="#ddd9d6"/><rect x="705" y="793" width="1" height="1" fill="#ddd9d6"/><rect x="702" y="793" width="1" height="1" fill="#ddd9d6"/><rect x="706" y="793" width="1" height="1" fill="#ddd9d6"/><rect x="703" y="794" width="1" height="1" fill="#ddd9d6"/><rect x="705" y="794" width="1" height="1" fill="#ddd9d6"/><rect x="705" y="796" width="1" height="1" fill="#ddd9d6"/><rect x="700" y="804" width="1" height="1" fill="#ddd9d6"/><rect x="701" y="804" width="1" height="1" fill="#ddd9d6"/><rect x="707" y="804" width="1" height="1" fill="#ddd9d6"/><rect x="708" y="804" width="1" height="1" fill="#ddd9d6"/><rect x="674" y="779" width="1" height="1" fill="#fbe4b3"/><rect x="674" y="780" width="1" height="1" fill="#f1d9a8"/><rect x="674" y="781" width="1" height="1" fill="#dcc597"/><rect x="674" y="782" width="1" height="1" fill="#d2bb8c"/><rect x="674" y="783" width="1" height="1" fill="#cab186"/><rect x="677" y="776" width="1" height="1" fill="#fbe4b3"/><rect x="677" y="777" width="1" height="1" fill="#f1d9a8"/><rect x="677" y="778" width="1" height="1" fill="#dcc597"/><rect x="677" y="779" width="1" height="1" fill="#d2bb8c"/><rect x="677" y="780" width="1" height="1" fill="#cab186"/><rect x="681" y="778" width="1" height="1" fill="#fbe4b3"/><rect x="681" y="779" width="1" height="1" fill="#f1d9a8"/><rect x="681" y="780" width="1" height="1" fill="#dcc597"/><rect x="681" y="781" width="1" height="1" fill="#d2bb8c"/><rect x="681" y="782" width="1" height="1" fill="#cab186"/><rect x="685" y="776" width="1" height="1" fill="#fbe4b3"/><rect x="685" y="777" width="1" height="1" fill="#f1d9a8"/><rect x="685" y="778" width="1" height="1" fill="#dcc597"/><rect x="685" y="779" width="1" height="1" fill="#d2bb8c"/><rect x="685" y="780" width="1" height="1" fill="#cab186"/><rect x="688" y="779" width="1" height="1" fill="#fbe4b3"/><rect x="688" y="780" width="1" height="1" fill="#f1d9a8"/><rect x="688" y="781" width="1" height="1" fill="#dcc597"/><rect x="688" y="782" width="1" height="1" fill="#d2bb8c"/><rect x="688" y="783" width="1" height="1" fill="#cab186"/><rect x="703" y="787" width="1" height="1" fill="#fbe6b8"/><rect x="704" y="787" width="1" height="1" fill="#fbe6b8"/><rect x="705" y="787" width="1" height="1" fill="#fbe6b8"/><rect x="703" y="788" width="1" height="1" fill="#f1dcae"/><rect x="704" y="788" width="1" height="1" fill="#f9e7c0"/><rect x="705" y="788" width="1" height="1" fill="#d9c293"/><rect x="703" y="789" width="1" height="1" fill="#f1dcae"/><rect x="704" y="789" width="1" height="1" fill="#f9e7c0"/><rect x="705" y="789" width="1" height="1" fill="#d9c293"/><rect x="703" y="790" width="1" height="1" fill="#f1dcae"/><rect x="704" y="790" width="1" height="1" fill="#f9e7c0"/><rect x="705" y="790" width="1" height="1" fill="#d9c293"/><rect x="703" y="791" width="1" height="1" fill="#f1dcae"/><rect x="704" y="791" width="1" height="1" fill="#f9e7c0"/><rect x="705" y="791" width="1" height="1" fill="#d9c293"/><rect x="676" y="781" width="1" height="1" fill="#1b1d22"/><rect x="677" y="781" width="1" height="1" fill="#1b1d22"/><rect x="678" y="781" width="1" height="1" fill="#1b1d22"/><rect x="684" y="781" width="1" height="1" fill="#1b1d22"/><rect x="685" y="781" width="1" height="1" fill="#1b1d22"/><rect x="686" y="781" width="1" height="1" fill="#1b1d22"/><rect x="677" y="782" width="1" height="1" fill="#1b1d22"/><rect x="685" y="782" width="1" height="1" fill="#1b1d22"/><rect x="677" y="783" width="1" height="1" fill="#1b1d22"/><rect x="685" y="783" width="1" height="1" fill="#1b1d22"/><rect x="677" y="784" width="1" height="1" fill="#1b1d22"/><rect x="685" y="784" width="1" height="1" fill="#1b1d22"/><rect x="677" y="785" width="1" height="1" fill="#1b1d22"/><rect x="685" y="785" width="1" height="1" fill="#1b1d22"/><rect x="680" y="783" width="1" height="1" fill="#1b1d22"/><rect x="681" y="783" width="1" height="1" fill="#1b1d22"/><rect x="682" y="783" width="1" height="1" fill="#1b1d22"/><rect x="673" y="784" width="1" height="1" fill="#1b1d22"/><rect x="674" y="784" width="1" height="1" fill="#1b1d22"/><rect x="675" y="784" width="1" height="1" fill="#1b1d22"/><rect x="687" y="784" width="1" height="1" fill="#1b1d22"/><rect x="688" y="784" width="1" height="1" fill="#1b1d22"/><rect x="689" y="784" width="1" height="1" fill="#1b1d22"/><rect x="681" y="784" width="1" height="1" fill="#1b1d22"/><rect x="681" y="785" width="1" height="1" fill="#1b1d22"/><rect x="674" y="785" width="1" height="1" fill="#1b1d22"/><rect x="688" y="785" width="1" height="1" fill="#1b1d22"/><rect x="674" y="786" width="1" height="1" fill="#1b1d22"/><rect x="675" y="786" width="1" height="1" fill="#1b1d22"/><rect x="676" y="786" width="1" height="1" fill="#1b1d22"/><rect x="677" y="786" width="1" height="1" fill="#1b1d22"/><rect x="678" y="786" width="1" height="1" fill="#1b1d22"/><rect x="679" y="786" width="1" height="1" fill="#1b1d22"/><rect x="680" y="786" width="1" height="1" fill="#1b1d22"/><rect x="681" y="786" width="1" height="1" fill="#1b1d22"/><rect x="682" y="786" width="1" height="1" fill="#1b1d22"/><rect x="683" y="786" width="1" height="1" fill="#1b1d22"/><rect x="684" y="786" width="1" height="1" fill="#1b1d22"/><rect x="685" y="786" width="1" height="1" fill="#1b1d22"/><rect x="686" y="786" width="1" height="1" fill="#1b1d22"/><rect x="687" y="786" width="1" height="1" fill="#1b1d22"/><rect x="688" y="786" width="1" height="1" fill="#1b1d22"/><rect x="681" y="787" width="1" height="1" fill="#1b1d22"/><rect x="681" y="788" width="1" height="1" fill="#1b1d22"/><rect x="681" y="789" width="1" height="1" fill="#1b1d22"/><rect x="681" y="790" width="1" height="1" fill="#1b1d22"/><rect x="681" y="791" width="1" height="1" fill="#1b1d22"/><rect x="681" y="792" width="1" height="1" fill="#1b1d22"/><rect x="681" y="793" width="1" height="1" fill="#1b1d22"/><rect x="681" y="794" width="1" height="1" fill="#1b1d22"/><rect x="681" y="795" width="1" height="1" fill="#1b1d22"/><rect x="681" y="796" width="1" height="1" fill="#1b1d22"/><rect x="681" y="797" width="1" height="1" fill="#1b1d22"/><rect x="681" y="798" width="1" height="1" fill="#1b1d22"/><rect x="681" y="799" width="1" height="1" fill="#1b1d22"/><rect x="681" y="800" width="1" height="1" fill="#1b1d22"/><rect x="681" y="801" width="1" height="1" fill="#1b1d22"/><rect x="681" y="802" width="1" height="1" fill="#1b1d22"/><rect x="679" y="803" width="1" height="1" fill="#1b1d22"/><rect x="680" y="803" width="1" height="1" fill="#1b1d22"/><rect x="681" y="803" width="1" height="1" fill="#1b1d22"/><rect x="682" y="803" width="1" height="1" fill="#1b1d22"/><rect x="683" y="803" width="1" height="1" fill="#1b1d22"/><rect x="679" y="804" width="1" height="1" fill="#1b1d22"/><rect x="681" y="804" width="1" height="1" fill="#1b1d22"/><rect x="683" y="804" width="1" height="1" fill="#1b1d22"/><rect x="702" y="792" width="1" height="1" fill="#1b1d22"/><rect x="703" y="792" width="1" height="1" fill="#1b1d22"/><rect x="704" y="792" width="1" height="1" fill="#1b1d22"/><rect x="705" y="792" width="1" height="1" fill="#1b1d22"/><rect x="706" y="792" width="1" height="1" fill="#1b1d22"/><rect x="704" y="793" width="1" height="1" fill="#1b1d22"/><rect x="704" y="794" width="1" height="1" fill="#1b1d22"/><rect x="704" y="795" width="1" height="1" fill="#1b1d22"/><rect x="704" y="796" width="1" height="1" fill="#1b1d22"/><rect x="704" y="797" width="1" height="1" fill="#1b1d22"/><rect x="704" y="798" width="1" height="1" fill="#1b1d22"/><rect x="704" y="799" width="1" height="1" fill="#1b1d22"/><rect x="704" y="800" width="1" height="1" fill="#1b1d22"/><rect x="704" y="801" width="1" height="1" fill="#1b1d22"/><rect x="704" y="802" width="1" height="1" fill="#1b1d22"/><rect x="702" y="803" width="1" height="1" fill="#1b1d22"/><rect x="703" y="803" width="1" height="1" fill="#1b1d22"/><rect x="704" y="803" width="1" height="1" fill="#1b1d22"/><rect x="705" y="803" width="1" height="1" fill="#1b1d22"/><rect x="706" y="803" width="1" height="1" fill="#1b1d22"/><rect x="702" y="804" width="1" height="1" fill="#1b1d22"/><rect x="704" y="804" width="1" height="1" fill="#1b1d22"/><rect x="706" y="804" width="1" height="1" fill="#1b1d22"/><rect x="677" y="775" width="1" height="1" fill="#f7b955"/><rect x="685" y="775" width="1" height="1" fill="#f7b955"/><rect x="681" y="777" width="1" height="1" fill="#f7b955"/><rect x="674" y="778" width="1" height="1" fill="#f7b955"/><rect x="688" y="778" width="1" height="1" fill="#f7b955"/><rect x="704" y="786" width="1" height="1" fill="#f7b955"/><rect x="704" y="785" width="1" height="1" fill="#f7b955"/><rect x="1133" y="787" width="1" height="1" fill="#ddd9d6"/><rect x="1134" y="787" width="1" height="1" fill="#ddd9d6"/><rect x="1135" y="787" width="1" height="1" fill="#ddd9d6"/><rect x="1138" y="787" width="1" height="1" fill="#ddd9d6"/><rect x="1139" y="787" width="1" height="1" fill="#ddd9d6"/><rect x="1141" y="787" width="1" height="1" fill="#ddd9d6"/><rect x="1142" y="787" width="1" height="1" fill="#ddd9d6"/><rect x="1145" y="787" width="1" height="1" fill="#ddd9d6"/><rect x="1146" y="787" width="1" height="1" fill="#ddd9d6"/><rect x="1147" y="787" width="1" height="1" fill="#ddd9d6"/><rect x="1134" y="788" width="1" height="1" fill="#ddd9d6"/><rect x="1135" y="788" width="1" height="1" fill="#ddd9d6"/><rect x="1139" y="788" width="1" height="1" fill="#ddd9d6"/><rect x="1141" y="788" width="1" height="1" fill="#ddd9d6"/><rect x="1147" y="788" width="1" height="1" fill="#ddd9d6"/><rect x="1135" y="789" width="1" height="1" fill="#ddd9d6"/><rect x="1139" y="789" width="1" height="1" fill="#ddd9d6"/><rect x="1147" y="790" width="1" height="1" fill="#ddd9d6"/><rect x="1135" y="791" width="1" height="1" fill="#ddd9d6"/><rect x="1132" y="804" width="1" height="1" fill="#ddd9d6"/><rect x="1136" y="804" width="1" height="1" fill="#ddd9d6"/><rect x="1137" y="804" width="1" height="1" fill="#ddd9d6"/><rect x="1143" y="804" width="1" height="1" fill="#ddd9d6"/><rect x="1144" y="804" width="1" height="1" fill="#ddd9d6"/><rect x="1145" y="804" width="1" height="1" fill="#ddd9d6"/><rect x="1146" y="804" width="1" height="1" fill="#ddd9d6"/><rect x="1162" y="793" width="1" height="1" fill="#ddd9d6"/><rect x="1164" y="793" width="1" height="1" fill="#ddd9d6"/><rect x="1161" y="793" width="1" height="1" fill="#ddd9d6"/><rect x="1165" y="793" width="1" height="1" fill="#ddd9d6"/><rect x="1162" y="794" width="1" height="1" fill="#ddd9d6"/><rect x="1164" y="794" width="1" height="1" fill="#ddd9d6"/><rect x="1164" y="796" width="1" height="1" fill="#ddd9d6"/><rect x="1159" y="804" width="1" height="1" fill="#ddd9d6"/><rect x="1160" y="804" width="1" height="1" fill="#ddd9d6"/><rect x="1166" y="804" width="1" height="1" fill="#ddd9d6"/><rect x="1167" y="804" width="1" height="1" fill="#ddd9d6"/><rect x="1133" y="779" width="1" height="1" fill="#fbe4b3"/><rect x="1133" y="780" width="1" height="1" fill="#f1d9a8"/><rect x="1133" y="781" width="1" height="1" fill="#dcc597"/><rect x="1133" y="782" width="1" height="1" fill="#d2bb8c"/><rect x="1133" y="783" width="1" height="1" fill="#cab186"/><rect x="1136" y="776" width="1" height="1" fill="#fbe4b3"/><rect x="1136" y="777" width="1" height="1" fill="#f1d9a8"/><rect x="1136" y="778" width="1" height="1" fill="#dcc597"/><rect x="1136" y="779" width="1" height="1" fill="#d2bb8c"/><rect x="1136" y="780" width="1" height="1" fill="#cab186"/><rect x="1140" y="778" width="1" height="1" fill="#fbe4b3"/><rect x="1140" y="779" width="1" height="1" fill="#f1d9a8"/><rect x="1140" y="780" width="1" height="1" fill="#dcc597"/><rect x="1140" y="781" width="1" height="1" fill="#d2bb8c"/><rect x="1140" y="782" width="1" height="1" fill="#cab186"/><rect x="1144" y="776" width="1" height="1" fill="#fbe4b3"/><rect x="1144" y="777" width="1" height="1" fill="#f1d9a8"/><rect x="1144" y="778" width="1" height="1" fill="#dcc597"/><rect x="1144" y="779" width="1" height="1" fill="#d2bb8c"/><rect x="1144" y="780" width="1" height="1" fill="#cab186"/><rect x="1147" y="779" width="1" height="1" fill="#fbe4b3"/><rect x="1147" y="780" width="1" height="1" fill="#f1d9a8"/><rect x="1147" y="781" width="1" height="1" fill="#dcc597"/><rect x="1147" y="782" width="1" height="1" fill="#d2bb8c"/><rect x="1147" y="783" width="1" height="1" fill="#cab186"/><rect x="1162" y="787" width="1" height="1" fill="#fbe6b8"/><rect x="1163" y="787" width="1" height="1" fill="#fbe6b8"/><rect x="1164" y="787" width="1" height="1" fill="#fbe6b8"/><rect x="1162" y="788" width="1" height="1" fill="#f1dcae"/><rect x="1163" y="788" width="1" height="1" fill="#f9e7c0"/><rect x="1164" y="788" width="1" height="1" fill="#d9c293"/><rect x="1162" y="789" width="1" height="1" fill="#f1dcae"/><rect x="1163" y="789" width="1" height="1" fill="#f9e7c0"/><rect x="1164" y="789" width="1" height="1" fill="#d9c293"/><rect x="1162" y="790" width="1" height="1" fill="#f1dcae"/><rect x="1163" y="790" width="1" height="1" fill="#f9e7c0"/><rect x="1164" y="790" width="1" height="1" fill="#d9c293"/><rect x="1162" y="791" width="1" height="1" fill="#f1dcae"/><rect x="1163" y="791" width="1" height="1" fill="#f9e7c0"/><rect x="1164" y="791" width="1" height="1" fill="#d9c293"/><rect x="1135" y="781" width="1" height="1" fill="#1b1d22"/><rect x="1136" y="781" width="1" height="1" fill="#1b1d22"/><rect x="1137" y="781" width="1" height="1" fill="#1b1d22"/><rect x="1143" y="781" width="1" height="1" fill="#1b1d22"/><rect x="1144" y="781" width="1" height="1" fill="#1b1d22"/><rect x="1145" y="781" width="1" height="1" fill="#1b1d22"/><rect x="1136" y="782" width="1" height="1" fill="#1b1d22"/><rect x="1144" y="782" width="1" height="1" fill="#1b1d22"/><rect x="1136" y="783" width="1" height="1" fill="#1b1d22"/><rect x="1144" y="783" width="1" height="1" fill="#1b1d22"/><rect x="1136" y="784" width="1" height="1" fill="#1b1d22"/><rect x="1144" y="784" width="1" height="1" fill="#1b1d22"/><rect x="1136" y="785" width="1" height="1" fill="#1b1d22"/><rect x="1144" y="785" width="1" height="1" fill="#1b1d22"/><rect x="1139" y="783" width="1" height="1" fill="#1b1d22"/><rect x="1140" y="783" width="1" height="1" fill="#1b1d22"/><rect x="1141" y="783" width="1" height="1" fill="#1b1d22"/><rect x="1132" y="784" width="1" height="1" fill="#1b1d22"/><rect x="1133" y="784" width="1" height="1" fill="#1b1d22"/><rect x="1134" y="784" width="1" height="1" fill="#1b1d22"/><rect x="1146" y="784" width="1" height="1" fill="#1b1d22"/><rect x="1147" y="784" width="1" height="1" fill="#1b1d22"/><rect x="1148" y="784" width="1" height="1" fill="#1b1d22"/><rect x="1140" y="784" width="1" height="1" fill="#1b1d22"/><rect x="1140" y="785" width="1" height="1" fill="#1b1d22"/><rect x="1133" y="785" width="1" height="1" fill="#1b1d22"/><rect x="1147" y="785" width="1" height="1" fill="#1b1d22"/><rect x="1133" y="786" width="1" height="1" fill="#1b1d22"/><rect x="1134" y="786" width="1" height="1" fill="#1b1d22"/><rect x="1135" y="786" width="1" height="1" fill="#1b1d22"/><rect x="1136" y="786" width="1" height="1" fill="#1b1d22"/><rect x="1137" y="786" width="1" height="1" fill="#1b1d22"/><rect x="1138" y="786" width="1" height="1" fill="#1b1d22"/><rect x="1139" y="786" width="1" height="1" fill="#1b1d22"/><rect x="1140" y="786" width="1" height="1" fill="#1b1d22"/><rect x="1141" y="786" width="1" height="1" fill="#1b1d22"/><rect x="1142" y="786" width="1" height="1" fill="#1b1d22"/><rect x="1143" y="786" width="1" height="1" fill="#1b1d22"/><rect x="1144" y="786" width="1" height="1" fill="#1b1d22"/><rect x="1145" y="786" width="1" height="1" fill="#1b1d22"/><rect x="1146" y="786" width="1" height="1" fill="#1b1d22"/><rect x="1147" y="786" width="1" height="1" fill="#1b1d22"/><rect x="1140" y="787" width="1" height="1" fill="#1b1d22"/><rect x="1140" y="788" width="1" height="1" fill="#1b1d22"/><rect x="1140" y="789" width="1" height="1" fill="#1b1d22"/><rect x="1140" y="790" width="1" height="1" fill="#1b1d22"/><rect x="1140" y="791" width="1" height="1" fill="#1b1d22"/><rect x="1140" y="792" width="1" height="1" fill="#1b1d22"/><rect x="1140" y="793" width="1" height="1" fill="#1b1d22"/><rect x="1140" y="794" width="1" height="1" fill="#1b1d22"/><rect x="1140" y="795" width="1" height="1" fill="#1b1d22"/><rect x="1140" y="796" width="1" height="1" fill="#1b1d22"/><rect x="1140" y="797" width="1" height="1" fill="#1b1d22"/><rect x="1140" y="798" width="1" height="1" fill="#1b1d22"/><rect x="1140" y="799" width="1" height="1" fill="#1b1d22"/><rect x="1140" y="800" width="1" height="1" fill="#1b1d22"/><rect x="1140" y="801" width="1" height="1" fill="#1b1d22"/><rect x="1140" y="802" width="1" height="1" fill="#1b1d22"/><rect x="1138" y="803" width="1" height="1" fill="#1b1d22"/><rect x="1139" y="803" width="1" height="1" fill="#1b1d22"/><rect x="1140" y="803" width="1" height="1" fill="#1b1d22"/><rect x="1141" y="803" width="1" height="1" fill="#1b1d22"/><rect x="1142" y="803" width="1" height="1" fill="#1b1d22"/><rect x="1138" y="804" width="1" height="1" fill="#1b1d22"/><rect x="1140" y="804" width="1" height="1" fill="#1b1d22"/><rect x="1142" y="804" width="1" height="1" fill="#1b1d22"/><rect x="1161" y="792" width="1" height="1" fill="#1b1d22"/><rect x="1162" y="792" width="1" height="1" fill="#1b1d22"/><rect x="1163" y="792" width="1" height="1" fill="#1b1d22"/><rect x="1164" y="792" width="1" height="1" fill="#1b1d22"/><rect x="1165" y="792" width="1" height="1" fill="#1b1d22"/><rect x="1163" y="793" width="1" height="1" fill="#1b1d22"/><rect x="1163" y="794" width="1" height="1" fill="#1b1d22"/><rect x="1163" y="795" width="1" height="1" fill="#1b1d22"/><rect x="1163" y="796" width="1" height="1" fill="#1b1d22"/><rect x="1163" y="797" width="1" height="1" fill="#1b1d22"/><rect x="1163" y="798" width="1" height="1" fill="#1b1d22"/><rect x="1163" y="799" width="1" height="1" fill="#1b1d22"/><rect x="1163" y="800" width="1" height="1" fill="#1b1d22"/><rect x="1163" y="801" width="1" height="1" fill="#1b1d22"/><rect x="1163" y="802" width="1" height="1" fill="#1b1d22"/><rect x="1161" y="803" width="1" height="1" fill="#1b1d22"/><rect x="1162" y="803" width="1" height="1" fill="#1b1d22"/><rect x="1163" y="803" width="1" height="1" fill="#1b1d22"/><rect x="1164" y="803" width="1" height="1" fill="#1b1d22"/><rect x="1165" y="803" width="1" height="1" fill="#1b1d22"/><rect x="1161" y="804" width="1" height="1" fill="#1b1d22"/><rect x="1163" y="804" width="1" height="1" fill="#1b1d22"/><rect x="1165" y="804" width="1" height="1" fill="#1b1d22"/><rect x="1133" y="776" width="1" height="1" fill="#f7b955"/><rect x="1133" y="778" width="1" height="1" fill="#f7b955"/><rect x="1136" y="774" width="1" height="1" fill="#f7b955"/><rect x="1136" y="775" width="1" height="1" fill="#f7b955"/><rect x="1140" y="777" width="1" height="1" fill="#f7b955"/><rect x="1141" y="776" width="1" height="1" fill="#f7b955"/><rect x="1144" y="773" width="1" height="1" fill="#f7b955"/><rect x="1144" y="775" width="1" height="1" fill="#f7b955"/><rect x="1147" y="777" width="1" height="1" fill="#f7b955"/><rect x="1147" y="778" width="1" height="1" fill="#f7b955"/><rect x="1163" y="784" width="1" height="1" fill="#f7b955"/><rect x="1163" y="786" width="1" height="1" fill="#f7b955"/><rect x="1339.5" y="219" width="3" height="1" fill="#555"/><rect x="1340.5" y="220" width="1" height="3" fill="#666"/><rect x="1343.5" y="221" width="1" height="2" fill="#888"/><rect x="1352.0" y="219" width="3" height="1" fill="#555"/><rect x="1353.0" y="220" width="1" height="3" fill="#666"/><rect x="1356.0" y="221" width="1" height="2" fill="#888"/><rect x="1364.5" y="219" width="3" height="1" fill="#555"/><rect x="1365.5" y="220" width="1" height="3" fill="#666"/><rect x="1368.5" y="221" width="1" height="2" fill="#888"/><rect x="1377.0" y="219" width="3" height="1" fill="#555"/><rect x="1378.0" y="220" width="1" height="3" fill="#666"/><rect x="1381.0" y="221" width="1" height="2" fill="#888"/><rect x="1389.5" y="219" width="3" height="1" fill="#555"/><rect x="1390.5" y="220" width="1" height="3" fill="#666"/><rect x="1393.5" y="221" width="1" height="2" fill="#888"/><rect x="1402.0" y="219" width="3" height="1" fill="#555"/><rect x="1403.0" y="220" width="1" height="3" fill="#666"/><rect x="1406.0" y="221" width="1" height="2" fill="#888"/><rect x="1414.5" y="219" width="3" height="1" fill="#555"/><rect x="1415.5" y="220" width="1" height="3" fill="#666"/><rect x="1418.5" y="221" width="1" height="2" fill="#888"/><rect x="1427.0" y="219" width="3" height="1" fill="#555"/><rect x="1428.0" y="220" width="1" height="3" fill="#666"/><rect x="1431.0" y="221" width="1" height="2" fill="#888"/><rect x="1439.5" y="219" width="3" height="1" fill="#555"/><rect x="1440.5" y="220" width="1" height="3" fill="#666"/><rect x="1443.5" y="221" width="1" height="2" fill="#888"/><rect x="1452.0" y="219" width="3" height="1" fill="#555"/><rect x="1453.0" y="220" width="1" height="3" fill="#666"/><rect x="1456.0" y="221" width="1" height="2" fill="#888"/><rect x="1464.5" y="219" width="3" height="1" fill="#555"/><rect x="1465.5" y="220" width="1" height="3" fill="#666"/><rect x="1468.5" y="221" width="1" height="2" fill="#888"/><rect x="1339.5" y="231" width="3" height="1" fill="#555"/><rect x="1340.5" y="232" width="1" height="3" fill="#666"/><rect x="1352.0" y="231" width="3" height="1" fill="#555"/><rect x="1353.0" y="232" width="1" height="3" fill="#666"/><rect x="1364.5" y="231" width="3" height="1" fill="#555"/><rect x="1365.5" y="232" width="1" height="3" fill="#666"/><rect x="1377.0" y="231" width="3" height="1" fill="#555"/><rect x="1378.0" y="232" width="1" height="3" fill="#666"/><rect x="1389.5" y="231" width="3" height="1" fill="#555"/><rect x="1390.5" y="232" width="1" height="3" fill="#666"/><rect x="1402.0" y="231" width="3" height="1" fill="#555"/><rect x="1403.0" y="232" width="1" height="3" fill="#666"/><rect x="1414.5" y="231" width="3" height="1" fill="#555"/><rect x="1415.5" y="232" width="1" height="3" fill="#666"/><rect x="1427.0" y="231" width="3" height="1" fill="#555"/><rect x="1428.0" y="232" width="1" height="3" fill="#666"/><rect x="1439.5" y="231" width="3" height="1" fill="#555"/><rect x="1440.5" y="232" width="1" height="3" fill="#666"/><rect x="1452.0" y="231" width="3" height="1" fill="#555"/><rect x="1453.0" y="232" width="1" height="3" fill="#666"/><defs><pattern id="chk" width="2" height="2" patternUnits="userSpaceOnUse"><rect width="2" height="2" fill="#fff"/><rect width="1" height="1" fill="#444"/><rect x="1" y="1" width="1" height="1" fill="#444"/></pattern></defs><path d="M68.8 81.2L80.6 69.4" stroke="#fff" stroke-width="4.6"/><path d="M67.2 79.6L68.6 83.8L70.4 82.8Z" fill="#fff"/><path d="M69.8 76.8L73.2 80.2" stroke="#555" stroke-width="0.9"/><rect x="65.8" y="83" width="2.4" height="2.2" fill="#fff"/><path d="M70.5 197Q71 204.5 79.5 205.5" stroke="#fff" stroke-width="1.5" fill="none"/><path d="M67.2 197.8L70.5 193.6L73.8 197.8Z M79 202.2L83.2 205.5L79 208.8Z" fill="#fff"/><rect x="98" y="199" width="8" height="8" fill="#fff"/><rect x="94" y="195" width="8" height="8" fill="#000"/><rect x="64.5" y="227.5" width="12" height="12" fill="none" stroke="#fff" stroke-width="1.1" stroke-dasharray="2 1.2"/><path d="M76.5 234.5V243M71.5 239.5H80.5" stroke="#fff" stroke-width="1.2"/><path d="M99 233.5L107.5 242" stroke="#fff" stroke-width="2.6"/><path d="M95.5 229.5L99 233M99 229.5L95.5 233" stroke="#fff" stroke-width="1.6"/><rect x="96.8" y="227.3" width="1.1" height="1.1" fill="#fff"/><rect x="93.2" y="230.8" width="1.1" height="1.1" fill="#fff"/><rect x="100.6" y="230.8" width="1.1" height="1.1" fill="#fff"/><rect x="94" y="234" width="1.1" height="1.1" fill="#fff"/><rect x="100" y="228" width="1.1" height="1.1" fill="#fff"/><path d="M67.2 267.2L78.3 256.1" stroke="#fff" stroke-width="4.4"/><path d="M67.6 263.8L70.2 266.4" stroke="#353535" stroke-width="0.9"/><rect x="63.8" y="269" width="2.6" height="2.6" fill="#fff"/><path d="M93 266.5L103 256L109 259.5V262L99.5 271.5H96.5L93 269Z" fill="#fff"/><path d="M94 266.2L98.8 269L108.5 259.8" stroke="#4b4b4b" stroke-width="0.9" fill="none"/><path d="M98.8 269V271.5" stroke="#4b4b4b" stroke-width="0.9"/><rect x="64.6" y="283.4" width="15" height="15" fill="none" stroke="#fff" stroke-width="1.2"/><circle cx="101" cy="291" r="7.6" fill="none" stroke="#fff" stroke-width="1.2"/><path d="M73 311L80.1 318V320L73 327H72L66.5 321.5L65.5 322V327.5L64.2 328V319L71.5 311Z" fill="#fff"/><path d="M67.5 318.8Q70 319 72.8 315.3" stroke="#4b4b4b" stroke-width="0.9" fill="none"/><path d="M96 323.5L107 312.5" stroke="#fff" stroke-width="4.3"/><path d="M99 320.5L106 313.5" stroke="#4b4b4b" stroke-width="2.2" stroke-dasharray="1 0.8"/><rect x="93.2" y="325" width="2.4" height="2.4" fill="#fff"/><path d="M76.5 345L79.5 342" stroke="#fff" stroke-width="4.5" stroke-linecap="round"/><path d="M72 343.5L77.5 349L76 350L70.5 344.5Z" fill="#fff"/><path d="M74 347L65.5 355" stroke="#fff" stroke-width="2.6"/><path d="M70.5 349.5L68.8 351.2" stroke="#4b4b4b" stroke-width="0.8"/><rect x="65" y="376" width="14" height="14.5" fill="#fff"/><path d="M66 381L67.5 379.5L69 381L70.5 379.5L72 381L73.5 379.5L75 381L76.5 379.5L78 381" stroke="#4b4b4b" stroke-width="0.9" fill="none"/><rect x="94" y="376" width="14" height="14" fill="#fff"/><path d="M97.2 377.8L101 373.8L104.8 377.8Z M97.2 388.2L101 392.2L104.8 388.2Z M95.8 379.2L92 383L95.8 386.8Z M106.2 379.2L110 383L106.2 386.8Z" fill="#fff" stroke="#4b4b4b" stroke-width="0.9" stroke-linejoin="round"/><path d="M97.5 377.5V378.5H104.5V377.5 M97.5 388.5V387.5H104.5V388.5 M96 379.5H96.8V386.5H96 M106 379.5H105.2V386.5H106" fill="none" stroke="#4b4b4b" stroke-width="1"/><path d="M68.5 411.5H65.5V427H68.5" stroke="#2f8fe0" stroke-width="2.2" fill="none"/><rect x="70" y="411" width="1" height="1" fill="#fff"/><rect x="70" y="427" width="1" height="1" fill="#fff"/><rect x="72" y="411" width="1" height="1" fill="#fff"/><rect x="72" y="427" width="1" height="1" fill="#fff"/><rect x="74" y="411" width="1" height="1" fill="#fff"/><rect x="74" y="427" width="1" height="1" fill="#fff"/><rect x="76" y="411" width="1" height="1" fill="#fff"/><rect x="76" y="427" width="1" height="1" fill="#fff"/><rect x="78" y="411" width="1" height="1" fill="#fff"/><rect x="78" y="427" width="1" height="1" fill="#fff"/><rect x="80" y="411" width="1" height="1" fill="#fff"/><rect x="80" y="427" width="1" height="1" fill="#fff"/><rect x="80" y="413" width="1" height="1" fill="#fff"/><rect x="80" y="415" width="1" height="1" fill="#fff"/><rect x="80" y="417" width="1" height="1" fill="#fff"/><rect x="80" y="419" width="1" height="1" fill="#fff"/><rect x="80" y="421" width="1" height="1" fill="#fff"/><rect x="80" y="423" width="1" height="1" fill="#fff"/><rect x="80" y="425" width="1" height="1" fill="#fff"/><path d="M72 418V424.5L73.5 423L75 425L76 424.5L75 422.5H77Z" fill="#fff"/><rect x="93.5" y="417.5" width="7" height="8" fill="none" stroke="#fff" stroke-width="1.1"/><rect x="102" y="417" width="1" height="1" fill="#fff"/><rect x="102" y="425" width="1" height="1" fill="#fff"/><rect x="104" y="417" width="1" height="1" fill="#fff"/><rect x="104" y="425" width="1" height="1" fill="#fff"/><rect x="106" y="417" width="1" height="1" fill="#fff"/><rect x="106" y="425" width="1" height="1" fill="#fff"/><rect x="108" y="417" width="1" height="1" fill="#fff"/><rect x="108" y="425" width="1" height="1" fill="#fff"/><rect x="108" y="419" width="1" height="1" fill="#fff"/><rect x="102" y="419" width="1" height="1" fill="#fff"/><rect x="108" y="421" width="1" height="1" fill="#fff"/><rect x="102" y="421" width="1" height="1" fill="#fff"/><rect x="108" y="423" width="1" height="1" fill="#fff"/><rect x="102" y="423" width="1" height="1" fill="#fff"/><rect x="105" y="419" width="1" height="5" fill="#fff"/><rect x="103" y="421" width="5" height="1" fill="#fff"/><path d="M97 417V415.5Q97 412 101 412Q104.5 412 105 415" stroke="#fff" stroke-width="1.1" fill="none"/><path d="M103 414L105 416.3L107 414" stroke="#fff" stroke-width="1" fill="none"/><path d="M68.5 455V449.5H70V454.5M70 454V447.5H71.8V454M71.8 454V448H73.6V454.5M73.6 454.5V449H75.6V455.5L75.6 459Q75 463 72 463H69.5L64.5 455.5L66 454.2L68.5 456.5Z" fill="#fff" stroke="#fff" stroke-width="0.9" stroke-linejoin="round"/><circle cx="98.5" cy="452.5" r="5.3" fill="#fff"/><path d="M102 456L108 462" stroke="#fff" stroke-width="2.6"/><rect x="64.6" y="475.4" width="15.2" height="15.2" fill="none" stroke="#fff" stroke-width="1.2"/><rect x="66.5" y="477.8" width="11.5" height="11" fill="none" stroke="#fff" stroke-width="0.9"/><rect x="67.3" y="478.6" width="10" height="9.5" fill="url(#chk)"/><rect x="93.5" y="475.4" width="15.2" height="15.2" fill="none" stroke="#fff" stroke-width="1.2"/><rect x="95.5" y="477.8" width="11.5" height="11" fill="none" stroke="#fff" stroke-width="1.1"/><path d="M67 513Q71 506.5 78.5 510" stroke="#fff" stroke-width="3" fill="none"/><path d="M64.3 509.5V516.5H71Z" fill="#fff"/><path d="M106 513Q102 506.5 94.5 510" stroke="#fff" stroke-width="3" fill="none"/><path d="M108.7 509.5V516.5H102Z" fill="#fff"/><rect x="1479.1" y="67.8" width="3.8" height="16.4" fill="#fff" transform="rotate(0 1481 76)"/><rect x="1479.1" y="67.8" width="3.8" height="16.4" fill="#fff" transform="rotate(90 1481 76)"/><path d="M1479.8 73L1478.4 68.0H1483.6L1482.2 73Z M1479.8 79L1478.4 84.0H1483.6L1482.2 79Z" fill="#fff" transform="rotate(45 1481 76)"/><path d="M1479.8 73L1478.4 68.0H1483.6L1482.2 73Z M1479.8 79L1478.4 84.0H1483.6L1482.2 79Z" fill="#fff" transform="rotate(135 1481 76)"/><circle cx="1481" cy="76" r="5.41" fill="#fff"/><circle cx="1481" cy="76" r="3.69" fill="none" stroke="#262626" stroke-width="0.85"/><rect x="1480.1" y="75.1" width="1.8" height="1.8" fill="#1a1a1a"/><path d="M1252 140H1259" stroke="#000" stroke-width="2"/><rect x="1270.5" y="138" width="4.5" height="4" fill="none" stroke="#000" stroke-width="1.5"/><path d="M1273.5 135.5H1277.5V139" stroke="#000" stroke-width="1.5" fill="none"/><path d="M1288.5 135.5L1294.5 141.5M1294.5 135.5L1288.5 141.5" stroke="#000" stroke-width="2"/><defs><clipPath id="anclip"><rect x="120" y="715" width="225" height="167"/></clipPath></defs><g clip-path="url(#anclip)"><rect x="330.1" y="721.8" width="3.8" height="16.4" fill="#fff" transform="rotate(0 332 730)"/><rect x="330.1" y="721.8" width="3.8" height="16.4" fill="#fff" transform="rotate(90 332 730)"/><path d="M330.8 727L329.4 722.0H334.6L333.2 727Z M330.8 733L329.4 738.0H334.6L333.2 733Z" fill="#fff" transform="rotate(45 332 730)"/><path d="M330.8 727L329.4 722.0H334.6L333.2 727Z M330.8 733L329.4 738.0H334.6L333.2 733Z" fill="#fff" transform="rotate(135 332 730)"/><circle cx="332" cy="730" r="5.41" fill="#fff"/><circle cx="332" cy="730" r="3.69" fill="none" stroke="#262626" stroke-width="0.85"/><rect x="331.1" y="729.1" width="1.8" height="1.8" fill="#1a1a1a"/><rect x="330.1" y="751.8" width="3.8" height="16.4" fill="#fff" transform="rotate(0 332 760)"/><rect x="330.1" y="751.8" width="3.8" height="16.4" fill="#fff" transform="rotate(90 332 760)"/><path d="M330.8 757L329.4 752.0H334.6L333.2 757Z M330.8 763L329.4 768.0H334.6L333.2 763Z" fill="#fff" transform="rotate(45 332 760)"/><path d="M330.8 757L329.4 752.0H334.6L333.2 757Z M330.8 763L329.4 768.0H334.6L333.2 763Z" fill="#fff" transform="rotate(135 332 760)"/><circle cx="332" cy="760" r="5.41" fill="#fff"/><circle cx="332" cy="760" r="3.69" fill="none" stroke="#262626" stroke-width="0.85"/><rect x="331.1" y="759.1" width="1.8" height="1.8" fill="#1a1a1a"/><rect x="330.1" y="781.8" width="3.8" height="16.4" fill="#fff" transform="rotate(0 332 790)"/><rect x="330.1" y="781.8" width="3.8" height="16.4" fill="#fff" transform="rotate(90 332 790)"/><path d="M330.8 787L329.4 782.0H334.6L333.2 787Z M330.8 793L329.4 798.0H334.6L333.2 793Z" fill="#fff" transform="rotate(45 332 790)"/><path d="M330.8 787L329.4 782.0H334.6L333.2 787Z M330.8 793L329.4 798.0H334.6L333.2 793Z" fill="#fff" transform="rotate(135 332 790)"/><circle cx="332" cy="790" r="5.41" fill="#fff"/><circle cx="332" cy="790" r="3.69" fill="none" stroke="#262626" stroke-width="0.85"/><rect x="331.1" y="789.1" width="1.8" height="1.8" fill="#1a1a1a"/><rect x="330.1" y="811.8" width="3.8" height="16.4" fill="#fff" transform="rotate(0 332 820)"/><rect x="330.1" y="811.8" width="3.8" height="16.4" fill="#fff" transform="rotate(90 332 820)"/><path d="M330.8 817L329.4 812.0H334.6L333.2 817Z M330.8 823L329.4 828.0H334.6L333.2 823Z" fill="#fff" transform="rotate(45 332 820)"/><path d="M330.8 817L329.4 812.0H334.6L333.2 817Z M330.8 823L329.4 828.0H334.6L333.2 823Z" fill="#fff" transform="rotate(135 332 820)"/><circle cx="332" cy="820" r="5.41" fill="#fff"/><circle cx="332" cy="820" r="3.69" fill="none" stroke="#262626" stroke-width="0.85"/><rect x="331.1" y="819.1" width="1.8" height="1.8" fill="#1a1a1a"/><rect x="330.1" y="841.8" width="3.8" height="16.4" fill="#fff" transform="rotate(0 332 850)"/><rect x="330.1" y="841.8" width="3.8" height="16.4" fill="#fff" transform="rotate(90 332 850)"/><path d="M330.8 847L329.4 842.0H334.6L333.2 847Z M330.8 853L329.4 858.0H334.6L333.2 853Z" fill="#fff" transform="rotate(45 332 850)"/><path d="M330.8 847L329.4 842.0H334.6L333.2 847Z M330.8 853L329.4 858.0H334.6L333.2 853Z" fill="#fff" transform="rotate(135 332 850)"/><circle cx="332" cy="850" r="5.41" fill="#fff"/><circle cx="332" cy="850" r="3.69" fill="none" stroke="#262626" stroke-width="0.85"/><rect x="331.1" y="849.1" width="1.8" height="1.8" fill="#1a1a1a"/><rect x="330.1" y="871.8" width="3.8" height="16.4" fill="#fff" transform="rotate(0 332 880)"/><rect x="330.1" y="871.8" width="3.8" height="16.4" fill="#fff" transform="rotate(90 332 880)"/><path d="M330.8 877L329.4 872.0H334.6L333.2 877Z M330.8 883L329.4 888.0H334.6L333.2 883Z" fill="#fff" transform="rotate(45 332 880)"/><path d="M330.8 877L329.4 872.0H334.6L333.2 877Z M330.8 883L329.4 888.0H334.6L333.2 883Z" fill="#fff" transform="rotate(135 332 880)"/><circle cx="332" cy="880" r="5.41" fill="#fff"/><circle cx="332" cy="880" r="3.69" fill="none" stroke="#262626" stroke-width="0.85"/><rect x="331.1" y="879.1" width="1.8" height="1.8" fill="#1a1a1a"/></g><rect x="345" y="715" width="14" height="167" fill="#5f5f5f"/><rect x="346.5" y="716" width="11" height="12" rx="2.5" fill="#e4e4e4" stroke="#f8f8f8" stroke-width="1"/><path d="M348.5 724H355.5L352 719.5Z" fill="#a0a0a0"/><rect x="346.5" y="869" width="11" height="12" rx="2.5" fill="#e4e4e4" stroke="#f8f8f8" stroke-width="1"/><path d="M348.5 873H355.5L352 877.5Z" fill="#a0a0a0"/><rect x="346.5" y="730" width="11" height="83" rx="2.5" fill="#d2d2d2" stroke="#f4f4f4" stroke-width="1"/><path d="M348.5 770.0H355.5M348.5 771.5H355.5M348.5 773.0H355.5" stroke="#999" stroke-width="0.7"/><path d="M128 896H140M134 890V902" stroke="#fff" stroke-width="2.2"/><path d="M154 893L155 901Q155.5 902 156.5 902H163.5Q164.5 902 165 901L166 893Z" fill="#fff"/><path d="M153.5 893V891.5Q153.5 889.5 157 889.2H163Q166.5 889.5 166.5 891.5V893Z" fill="#fff"/><path d="M157 890.2V888.6H163V890.2" stroke="#fff" stroke-width="1" fill="none"/><path d="M155 892Q160 894 165 892" stroke="#4b4b4b" stroke-width="0.9" fill="none"/><path d="M181.5 889.5H179V903H181.5" stroke="#2f8fe0" stroke-width="2" fill="none"/><path d="M182.5 889.5H193V903H182.5" stroke="#fff" stroke-width="0.9" stroke-dasharray="1 1" fill="none"/><path d="M185.5 895V901.5L187 900L188.3 902L189.2 901.5L188.2 899.5H190Z" fill="#fff"/><path d="M346.5 704.5H352L346.5 710Z" fill="#f0f0f0"/><path d="M348.5 706.5L351.2 709.2V712.5" stroke="#f0f0f0" stroke-width="1.8" fill="none"/><path d="M965.5 704.5H971L965.5 710Z" fill="#f0f0f0"/><path d="M967.5 706.5L970.2 709.2V712.5" stroke="#f0f0f0" stroke-width="1.8" fill="none"/><path d="M1291.5 704.5H1297L1291.5 710Z" fill="#f0f0f0"/><path d="M1293.5 706.5L1296.2 709.2V712.5" stroke="#f0f0f0" stroke-width="1.8" fill="none"/><circle cx="376.5" cy="725.5" r="5.8" fill="#fff"/><path d="M380.0 729.0L385.5 734.5" stroke="#fff" stroke-width="3"/><path d="M373.2 725.5H379.8" stroke="#333" stroke-width="0.9"/><path d="M376.5 722.2V728.8" stroke="#333" stroke-width="0.9"/><circle cx="376.5" cy="751.5" r="5.8" fill="#fff"/><path d="M380.0 755.0L385.5 760.5" stroke="#fff" stroke-width="3"/><path d="M373.2 751.5H379.8" stroke="#333" stroke-width="0.9"/><rect x="371.6" y="773.6" width="14" height="13.5" fill="none" stroke="#fff" stroke-width="1.2"/><rect x="373.2" y="775.2" width="10.8" height="10.3" fill="url(#chk)"/><path d="M380 772.5H386" stroke="#fff" stroke-width="1" stroke-dasharray="1 1"/><path d="M522.5 888.5L515.5 895.8L522.5 903" stroke="#fff" stroke-width="2" fill="none"/><path d="M541.5 888.5L548.5 895.8L541.5 903" stroke="#fff" stroke-width="2" fill="none"/><path d="M696.5 892.5V899.5L692.5 896Z" fill="#fff"/><path d="M703.5 891.5V893.5" stroke="#fff" stroke-width="1"/><ellipse cx="703.5" cy="897.0" rx="5" ry="4.2" fill="none" stroke="#fff" stroke-width="1.3"/><path d="M701.8 893.3Q700.8 897.0 701.8 901.0M705.2 893.3Q706.2 897.0 705.2 901.0" stroke="#fff" stroke-width="1.1" fill="none"/><path d="M724.0 891.5V893.5" stroke="#fff" stroke-width="1"/><ellipse cx="724.0" cy="897.0" rx="5" ry="4.2" fill="none" stroke="#fff" stroke-width="1.3"/><path d="M722.3 893.3Q721.3 897.0 722.3 901.0M725.7 893.3Q726.7 897.0 725.7 901.0" stroke="#fff" stroke-width="1.1" fill="none"/><path d="M731 892.5V899.5L735 896Z" fill="#fff"/><path d="M995 889.5V902.5L1003 896Z" fill="#fff"/><path d="M1020.5 891.8A5.2 5.2 0 1 1 1019.6 898" stroke="#fff" stroke-width="1.4" fill="none"/><path d="M1017 893.5H1021.5V889" stroke="#fff" stroke-width="1.2" fill="none"/><path d="M1055 888.5L1048 895.8L1055 903" stroke="#fff" stroke-width="2" fill="none"/><path d="M1073.5 888.5L1080.5 895.8L1073.5 903" stroke="#fff" stroke-width="2" fill="none"/><rect x="1317" y="129.7" width="9.5" height="2.2" fill="#eee"/><path d="M1482.5 131.0H1488L1482.5 136.5Z" fill="#f0f0f0"/><path d="M1484.5 133.0L1487.2 135.7V139.0" stroke="#f0f0f0" stroke-width="1.8" fill="none"/><rect x="1317" y="334.7" width="9.5" height="2.2" fill="#eee"/><path d="M1482.5 336.0H1488L1482.5 341.5Z" fill="#f0f0f0"/><path d="M1484.5 338.0L1487.2 340.7V344.0" stroke="#f0f0f0" stroke-width="1.8" fill="none"/><rect x="1317" y="461.7" width="9.5" height="2.2" fill="#eee"/><path d="M1482.5 463.0H1488L1482.5 468.5Z" fill="#f0f0f0"/><path d="M1484.5 465.0L1487.2 467.7V471.0" stroke="#f0f0f0" stroke-width="1.8" fill="none"/><rect x="1317" y="608.2" width="9.5" height="2.2" fill="#eee"/><path d="M1482.5 609.5H1488L1482.5 615Z" fill="#f0f0f0"/><path d="M1484.5 611.5L1487.2 614.2V617.5" stroke="#f0f0f0" stroke-width="1.8" fill="none"/><rect x="1317.5" y="439.5" width="8.5" height="8" fill="none" stroke="#eee" stroke-width="1.3"/><path d="M1482.5 441.0H1488L1482.5 446.5Z" fill="#f0f0f0"/><path d="M1484.5 443.0L1487.2 445.7V449.0" stroke="#f0f0f0" stroke-width="1.8" fill="none"/><circle cx="1323.5" cy="152.5" r="5.8" fill="#fff"/><path d="M1327.0 156.0L1332.5 161.5" stroke="#fff" stroke-width="3"/><path d="M1320.2 152.5H1326.8" stroke="#333" stroke-width="0.9"/><path d="M1323.5 149.2V155.8" stroke="#333" stroke-width="0.9"/><circle cx="1349.5" cy="152.5" r="5.8" fill="#fff"/><path d="M1353.0 156.0L1358.5 161.5" stroke="#fff" stroke-width="3"/><path d="M1346.2 152.5H1352.8" stroke="#333" stroke-width="0.9"/><rect x="1370.6" y="148.6" width="14" height="13.5" fill="none" stroke="#fff" stroke-width="1.2"/><rect x="1372.2" y="150.2" width="10.8" height="10.3" fill="url(#chk)"/><path d="M1379 147.5H1385" stroke="#fff" stroke-width="1" stroke-dasharray="1 1"/><path d="M1320 360H1332M1326 354V366" stroke="#fff" stroke-width="2.2"/><path d="M1346 357L1347 365Q1347.5 366 1348.5 366H1355.5Q1356.5 366 1357 365L1358 357Z" fill="#fff"/><path d="M1345.5 357V355.5Q1345.5 353.5 1349 353.2H1355Q1358.5 353.5 1358.5 355.5V357Z" fill="#fff"/><path d="M1349 354.2V352.6H1355V354.2" stroke="#fff" stroke-width="1" fill="none"/><path d="M1347 356Q1352 358 1357 356" stroke="#4b4b4b" stroke-width="0.9" fill="none"/><rect x="1448" y="352" width="4" height="4" fill="#e0001a"/><rect x="1448" y="356" width="4" height="4" fill="#f2c8a8"/><rect x="1448" y="360" width="4" height="4" fill="#c0a010"/><rect x="1448" y="364" width="4" height="4" fill="#90e020"/><rect x="1449.3" y="357.3" width="1.6" height="1.6" fill="#d06000"/><rect x="1452" y="356" width="4" height="4" fill="#9a7a70"/><rect x="1456" y="356" width="4" height="4" fill="#5a9ad0"/><rect x="1460" y="356" width="4" height="4" fill="#a0e0ff"/><rect x="1461" y="357" width="2" height="2" fill="#0090f0"/><rect x="1480.1" y="351.8" width="3.8" height="16.4" fill="#fff" transform="rotate(0 1482 360)"/><rect x="1480.1" y="351.8" width="3.8" height="16.4" fill="#fff" transform="rotate(90 1482 360)"/><path d="M1480.8 357L1479.4 352.0H1484.6L1483.2 357Z M1480.8 363L1479.4 368.0H1484.6L1483.2 363Z" fill="#fff" transform="rotate(45 1482 360)"/><path d="M1480.8 357L1479.4 352.0H1484.6L1483.2 357Z M1480.8 363L1479.4 368.0H1484.6L1483.2 363Z" fill="#fff" transform="rotate(135 1482 360)"/><circle cx="1482" cy="360" r="5.41" fill="#fff"/><circle cx="1482" cy="360" r="3.69" fill="none" stroke="#262626" stroke-width="0.85"/><rect x="1481.1" y="359.1" width="1.8" height="1.8" fill="#1a1a1a"/><rect x="1481" y="375" width="14" height="40" fill="#5f5f5f"/><rect x="1482.5" y="376" width="11" height="12" rx="2.5" fill="#e4e4e4" stroke="#f8f8f8" stroke-width="1"/><path d="M1484.5 384H1491.5L1488 379.5Z" fill="#a0a0a0"/><rect x="1482.5" y="402" width="11" height="12" rx="2.5" fill="#e4e4e4" stroke="#f8f8f8" stroke-width="1"/><path d="M1484.5 406H1491.5L1488 410.5Z" fill="#a0a0a0"/><rect x="1314" y="415" width="167" height="14" fill="#6a6a6a"/><rect x="1315" y="416.5" width="11.5" height="11" rx="2.5" fill="#e4e4e4" stroke="#f8f8f8"/><path d="M1323 419V425L1318.5 422Z" fill="#a0a0a0"/><rect x="1468" y="416.5" width="11.5" height="11" rx="2.5" fill="#e4e4e4" stroke="#f8f8f8"/><path d="M1472 419V425L1476.5 422Z" fill="#a0a0a0"/><rect x="1329" y="416.5" width="118" height="11" rx="3" fill="#d0d0d0" stroke="#f2f2f2"/><path d="M1386.5 418.5V425.5M1388 418.5V425.5M1389.5 418.5V425.5" stroke="#999" stroke-width="0.7"/><path d="M1320 487H1332M1326 481V493" stroke="#fff" stroke-width="2.2"/><path d="M1346 484.5L1347 492.5Q1347.5 493.5 1348.5 493.5H1355.5Q1356.5 493.5 1357 492.5L1358 484.5Z" fill="#fff"/><path d="M1345.5 484.5V483.0Q1345.5 481.0 1349 480.7H1355Q1358.5 481.0 1358.5 483.0V484.5Z" fill="#fff"/><path d="M1349 481.7V480.1H1355V481.7" stroke="#fff" stroke-width="1" fill="none"/><path d="M1347 483.5Q1352 485.5 1357 483.5" stroke="#4b4b4b" stroke-width="0.9" fill="none"/><path d="M1375 478.5H1386V492H1381.5" fill="#fff"/><rect x="1375" y="478.5" width="11" height="13.5" fill="#fff"/><path d="M1370 482H1377L1381 486V495H1370Z" fill="#fff" stroke="#4b4b4b" stroke-width="0.9"/><path d="M1377 482.5V486H1380.5" stroke="#4b4b4b" stroke-width="0.9" fill="none"/><path d="M1397 480H1411L1413 486.5H1399Z" fill="#fff"/><path d="M1396 489H1409L1411.5 495.5H1398Z" fill="#fff"/><path d="M1404 487V494M1401 491L1404 494L1407 491" stroke="#4b4b4b" stroke-width="1" fill="none"/><path d="M1423 480H1437L1439 486.5H1425Z" fill="#fff"/><path d="M1422 489H1435L1437.5 495.5H1424Z" fill="#fff"/><path d="M1430 487V494M1427 491L1430 494L1433 491" stroke="#4b4b4b" stroke-width="1" fill="none"/><path d="M1318.8 524L1321 523.8L1321.5 522.8H1333.2L1330.8 526H1322.2L1321.5 525.2H1318.8Z" fill="#fff"/><rect x="1350.1" y="515.3" width="3.8" height="16.4" fill="#fff" transform="rotate(0 1352 523.5)"/><rect x="1350.1" y="515.3" width="3.8" height="16.4" fill="#fff" transform="rotate(90 1352 523.5)"/><path d="M1350.8 520.5L1349.4 515.5H1354.6L1353.2 520.5Z M1350.8 526.5L1349.4 531.5H1354.6L1353.2 526.5Z" fill="#fff" transform="rotate(45 1352 523.5)"/><path d="M1350.8 520.5L1349.4 515.5H1354.6L1353.2 520.5Z M1350.8 526.5L1349.4 531.5H1354.6L1353.2 526.5Z" fill="#fff" transform="rotate(135 1352 523.5)"/><circle cx="1352" cy="523.5" r="5.41" fill="#fff"/><circle cx="1352" cy="523.5" r="3.69" fill="none" stroke="#262626" stroke-width="0.85"/><rect x="1351.1" y="522.6" width="1.8" height="1.8" fill="#1a1a1a"/><path d="M1318.8 554L1321 553.8L1321.5 552.8H1333.2L1330.8 556H1322.2L1321.5 555.2H1318.8Z" fill="#fff"/><rect x="1350.1" y="545.3" width="3.8" height="16.4" fill="#fff" transform="rotate(0 1352 553.5)"/><rect x="1350.1" y="545.3" width="3.8" height="16.4" fill="#fff" transform="rotate(90 1352 553.5)"/><path d="M1350.8 550.5L1349.4 545.5H1354.6L1353.2 550.5Z M1350.8 556.5L1349.4 561.5H1354.6L1353.2 556.5Z" fill="#fff" transform="rotate(45 1352 553.5)"/><path d="M1350.8 550.5L1349.4 545.5H1354.6L1353.2 550.5Z M1350.8 556.5L1349.4 561.5H1354.6L1353.2 556.5Z" fill="#fff" transform="rotate(135 1352 553.5)"/><circle cx="1352" cy="553.5" r="5.41" fill="#fff"/><circle cx="1352" cy="553.5" r="3.69" fill="none" stroke="#262626" stroke-width="0.85"/><rect x="1351.1" y="552.6" width="1.8" height="1.8" fill="#1a1a1a"/><path d="M1318.8 584L1321 583.8L1321.5 582.8H1333.2L1330.8 586H1322.2L1321.5 585.2H1318.8Z" fill="#fff"/><rect x="1350.1" y="575.3" width="3.8" height="16.4" fill="#fff" transform="rotate(0 1352 583.5)"/><rect x="1350.1" y="575.3" width="3.8" height="16.4" fill="#fff" transform="rotate(90 1352 583.5)"/><path d="M1350.8 580.5L1349.4 575.5H1354.6L1353.2 580.5Z M1350.8 586.5L1349.4 591.5H1354.6L1353.2 586.5Z" fill="#fff" transform="rotate(45 1352 583.5)"/><path d="M1350.8 580.5L1349.4 575.5H1354.6L1353.2 580.5Z M1350.8 586.5L1349.4 591.5H1354.6L1353.2 586.5Z" fill="#fff" transform="rotate(135 1352 583.5)"/><circle cx="1352" cy="583.5" r="5.41" fill="#fff"/><circle cx="1352" cy="583.5" r="3.69" fill="none" stroke="#262626" stroke-width="0.85"/><rect x="1351.1" y="582.6" width="1.8" height="1.8" fill="#1a1a1a"/><rect x="1481" y="501" width="14" height="96" fill="#5f5f5f"/><rect x="1482.5" y="502" width="11" height="12" rx="2.5" fill="#e4e4e4" stroke="#f8f8f8" stroke-width="1"/><path d="M1484.5 510H1491.5L1488 505.5Z" fill="#a0a0a0"/><rect x="1482.5" y="584" width="11" height="12" rx="2.5" fill="#e4e4e4" stroke="#f8f8f8" stroke-width="1"/><path d="M1484.5 588H1491.5L1488 592.5Z" fill="#a0a0a0"/><rect x="1482.5" y="540" width="11" height="22" rx="2.5" fill="#d2d2d2" stroke="#f4f4f4" stroke-width="1"/><path d="M1484.5 549.5H1491.5M1484.5 551.0H1491.5M1484.5 552.5H1491.5" stroke="#999" stroke-width="0.7"/><rect x="707" y="692" width="10" height="1" fill="#f0f0f0"/><rect x="707" y="694" width="10" height="1" fill="#f0f0f0"/><rect x="707" y="696" width="10" height="1" fill="#f0f0f0"/><rect x="1399" y="325" width="10" height="1" fill="#f0f0f0"/><rect x="1399" y="327" width="10" height="1" fill="#f0f0f0"/><rect x="1399" y="329" width="10" height="1" fill="#f0f0f0"/><rect x="1399" y="430" width="10" height="1" fill="#f0f0f0"/><rect x="1399" y="432" width="10" height="1" fill="#f0f0f0"/><rect x="1399" y="434" width="10" height="1" fill="#f0f0f0"/><rect x="1399" y="452" width="10" height="1" fill="#f0f0f0"/><rect x="1399" y="454" width="10" height="1" fill="#f0f0f0"/><rect x="1399" y="456" width="10" height="1" fill="#f0f0f0"/><rect x="1399" y="598" width="10" height="1" fill="#f0f0f0"/><rect x="1399" y="600" width="10" height="1" fill="#f0f0f0"/><rect x="1399" y="602" width="10" height="1" fill="#f0f0f0"/><rect x="1399" y="804" width="10" height="1" fill="#f0f0f0"/><rect x="1399" y="806" width="10" height="1" fill="#f0f0f0"/><rect x="1399" y="808" width="10" height="1" fill="#f0f0f0"/><rect x="360" y="798" width="1" height="10" fill="#f0f0f0"/><rect x="362" y="798" width="1" height="10" fill="#f0f0f0"/><rect x="364" y="798" width="1" height="10" fill="#f0f0f0"/><rect x="980" y="798" width="1" height="10" fill="#f0f0f0"/><rect x="982" y="798" width="1" height="10" fill="#f0f0f0"/><rect x="984" y="798" width="1" height="10" fill="#f0f0f0"/><rect x="1306" y="513" width="1" height="10" fill="#f0f0f0"/><rect x="1308" y="513" width="1" height="10" fill="#f0f0f0"/><rect x="1310" y="513" width="1" height="10" fill="#f0f0f0"/></svg>
<svg style="left:0;top:0" width="1552" height="989" viewBox="0 0 1552 989"><path d="M1496 904V909H1491A5 5 0 0 0 1496 904Z M56 904V909H61A5 5 0 0 1 56 904Z" fill="#000"/></svg>
</body></html>
